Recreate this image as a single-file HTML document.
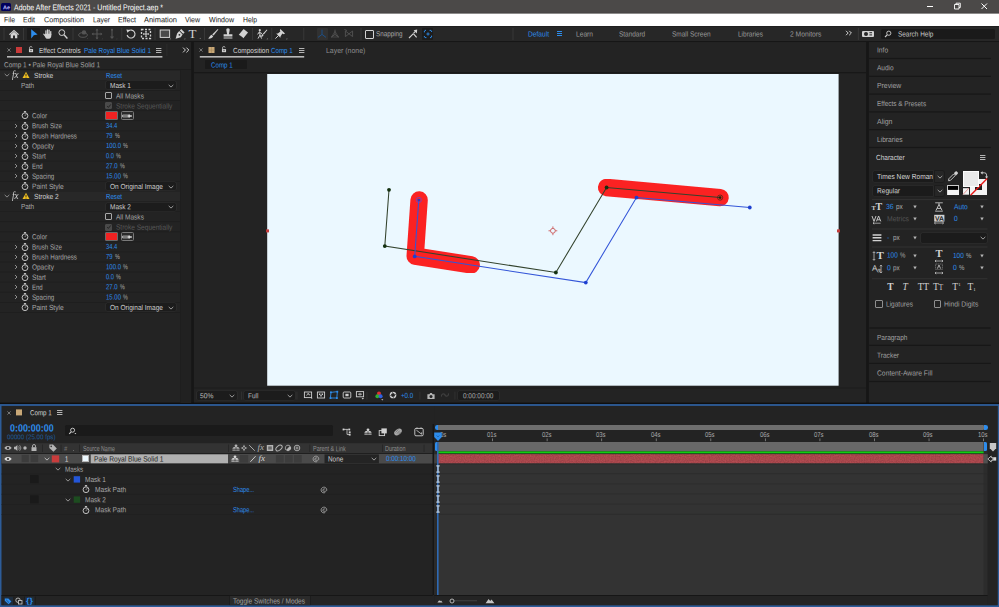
<!DOCTYPE html>
<html><head><meta charset="utf-8"><title>Adobe After Effects 2021 - Untitled Project.aep *</title>
<style>
html,body{margin:0;padding:0;background:#232323;}
body{width:999px;height:607px;position:relative;overflow:hidden;font-family:"Liberation Sans",sans-serif;}
#r{position:absolute;left:0;top:0;width:999px;height:607px;overflow:hidden;}
#r div,#r span,#r svg{position:absolute;}
#r span{white-space:pre;transform-origin:0 50%;display:block;line-height:12px;}
#r svg{overflow:visible;}
</style></head><body><div id="r">
<svg style="left:0px;top:0px" width="999" height="14"><rect x="0.00" y="0.00" width="999.00" height="13.60" fill="#4b4948"/></svg>
<svg style="left:0px;top:12px" width="999" height="2"><rect x="0.00" y="0.60" width="999.00" height="1.00" fill="#454342"/></svg>
<div style="left:1px;top:2.6px;width:10px;height:8.6px;background:#00005b;border-radius:1.5px;"></div>
<span id="t1" style="left:2.6px;top:1px;font-size:5.5px;color:#c4c4ff;transform:translateY(0.13px) scaleX(0.9956) rotate(0.05deg);font-weight:bold;">Ae</span>
<span id="t2" style="left:14px;top:1px;font-size:8.4px;color:#ffffff;transform:translateY(0.18px) scaleX(0.8341) rotate(0.05deg);">Adobe After Effects 2021 - Untitled Project.aep *</span>
<svg style="left:920px;top:0px;" width="79" height="14" viewBox="0 0 79 14"><path d="M7 6.5h6" stroke="#fff" stroke-width="1" fill="none"/><path d="M34.5 4.5h4.5v4.5h-4.5z M36 4.5v-1.3h4.3v4.3h-1.3" stroke="#fff" stroke-width="0.9" fill="none"/><path d="M61.5 3.5l5.5 5.5M67 3.5l-5.5 5.5" stroke="#fff" stroke-width="1" fill="none"/></svg>
<svg style="left:0px;top:13px" width="999" height="14"><rect x="0.00" y="0.60" width="999.00" height="12.50" fill="#ffffff"/></svg>
<span id="t3" style="left:4px;top:14px;font-size:7.6px;color:#111111;transform:translateY(0.23px) scaleX(0.8980) rotate(0.05deg);">File</span>
<span id="t4" style="left:23px;top:14px;font-size:7.6px;color:#111111;transform:translateY(0.23px) scaleX(0.9165) rotate(0.05deg);">Edit</span>
<span id="t5" style="left:44px;top:14px;font-size:7.6px;color:#111111;transform:translateY(0.23px) scaleX(0.9474) rotate(0.05deg);">Composition</span>
<span id="t6" style="left:93px;top:14px;font-size:7.6px;color:#111111;transform:translateY(0.23px) scaleX(0.8947) rotate(0.05deg);">Layer</span>
<span id="t7" style="left:118px;top:14px;font-size:7.6px;color:#111111;transform:translateY(0.23px) scaleX(0.9335) rotate(0.05deg);">Effect</span>
<span id="t8" style="left:144px;top:14px;font-size:7.6px;color:#111111;transform:translateY(0.23px) scaleX(0.9769) rotate(0.05deg);">Animation</span>
<span id="t9" style="left:185px;top:14px;font-size:7.6px;color:#111111;transform:translateY(0.23px) scaleX(0.9187) rotate(0.05deg);">View</span>
<span id="t10" style="left:209px;top:14px;font-size:7.6px;color:#111111;transform:translateY(0.23px) scaleX(0.9254) rotate(0.05deg);">Window</span>
<span id="t11" style="left:243px;top:14px;font-size:7.6px;color:#111111;transform:translateY(0.23px) scaleX(0.8960) rotate(0.05deg);">Help</span>
<svg style="left:0px;top:26px" width="999" height="16"><rect x="0.00" y="0.10" width="999.00" height="15.40" fill="#272727"/></svg>
<svg style="left:0px;top:26px" width="999" height="1"><rect x="0.00" y="0.10" width="999.00" height="0.70" fill="#1c1c1c"/></svg>
<svg style="left:0px;top:41px" width="999" height="2"><rect x="0.00" y="0.00" width="999.00" height="1.20" fill="#161616"/></svg>
<svg style="left:3px;top:28px" width="2" height="12"><rect x="0.60" y="0.00" width="0.80" height="12.00" fill="#3d3d3d"/></svg>
<svg style="left:23px;top:28px" width="1" height="12"><rect x="0.10" y="0.00" width="0.80" height="12.00" fill="#3d3d3d"/></svg>
<svg style="left:72px;top:28px" width="2" height="12"><rect x="0.60" y="0.00" width="0.80" height="12.00" fill="#3d3d3d"/></svg>
<svg style="left:121px;top:28px" width="2" height="12"><rect x="0.40" y="0.00" width="0.80" height="12.00" fill="#3d3d3d"/></svg>
<svg style="left:154px;top:28px" width="2" height="12"><rect x="0.60" y="0.00" width="0.80" height="12.00" fill="#3d3d3d"/></svg>
<svg style="left:204px;top:28px" width="1" height="12"><rect x="0.10" y="0.00" width="0.80" height="12.00" fill="#3d3d3d"/></svg>
<svg style="left:252px;top:28px" width="1" height="12"><rect x="0.20" y="0.00" width="0.80" height="12.00" fill="#3d3d3d"/></svg>
<svg style="left:271px;top:28px" width="2" height="12"><rect x="0.40" y="0.00" width="0.80" height="12.00" fill="#3d3d3d"/></svg>
<svg style="left:303px;top:28px" width="2" height="12"><rect x="0.40" y="0.00" width="0.80" height="12.00" fill="#3d3d3d"/></svg>
<svg style="left:360px;top:28px" width="2" height="12"><rect x="0.60" y="0.00" width="0.80" height="12.00" fill="#3d3d3d"/></svg>
<svg style="left:512px;top:28px" width="2" height="12"><rect x="0.60" y="0.00" width="0.80" height="12.00" fill="#3d3d3d"/></svg>
<svg style="left:857px;top:28px" width="2" height="12"><rect x="0.90" y="0.00" width="0.80" height="12.00" fill="#3d3d3d"/></svg>
<div style="left:27px;top:27.5px;width:12.6px;height:12.6px;background:#1c1c1c;border-radius:1px;"></div>
<div style="left:316.5px;top:27.5px;width:11.5px;height:12.6px;background:#313131;border-radius:1px;"></div>
<div style="left:422px;top:27.5px;width:11.3px;height:12.6px;background:#1c1c1c;border-radius:1px;"></div>
<svg style="left:7.4px;top:26.6px;" width="14" height="14" viewBox="-7.0 -7.0 14 14"><path d="M-5 0.3L0 -4.3L5 0.3L4.2 1L0 -2.8L-4.2 1Z M-3.3 0.6L0 -2.3L3.3 0.6V4.2H1V1.4H-1V4.2H-3.3Z" fill="#d2d2d2"/></svg>
<svg style="left:26.5px;top:26.6px;" width="14" height="14" viewBox="-7.0 -7.0 14 14"><path d="M-2.8 -4.8L3.6 0.6L-0.2 1.2L-2.8 4.6Z" fill="#2d8ceb"/></svg>
<svg style="left:41.0px;top:26.6px;" width="14" height="14" viewBox="-7.0 -7.0 14 14"><g stroke="#d2d2d2" stroke-width="1.25" stroke-linecap="round" fill="none"><path d="M-2.1 0.4V-3.2"/><path d="M-0.5 0V-4.2"/><path d="M1.1 0V-3.8"/><path d="M2.7 0.6V-2.4"/><path d="M-2.4 2.2L-4.2 0.2"/></g><path d="M-2.7 -0.2H3.3V1.6C3.3 3.4 2.4 4.6 1.4 4.8H-1.4C-2.2 4.2 -3.2 3 -3.4 1.6Z" fill="#d2d2d2"/></svg>
<svg style="left:56.0px;top:26.6px;" width="14" height="14" viewBox="-7.0 -7.0 14 14"><circle cx="-1.2" cy="-1.4" r="2.9" fill="none" stroke="#d2d2d2" stroke-width="1"/><path d="M1 0.8L4.4 4.4" stroke="#d2d2d2" stroke-width="1.4"/></svg>
<svg style="left:75.5px;top:26.6px;" width="14" height="14" viewBox="-7.0 -7.0 14 14"><ellipse cx="0" cy="1" rx="4.3" ry="2.3" fill="none" stroke="#555555" stroke-width="1"/><circle cx="1" cy="-1.6" r="2.2" fill="#555555"/><path d="M4 4.8h1v-1z" fill="#555555"/></svg>
<svg style="left:90.0px;top:26.6px;" width="14" height="14" viewBox="-7.0 -7.0 14 14"><path d="M0 -4.5V4.5M-4.5 0H4.5" stroke="#555555" stroke-width="1.1"/><path d="M0 -5.4l1.5 1.8h-3zM0 5.4l1.5-1.8h-3zM-5.4 0l1.8 1.5v-3zM5.4 0l-1.8 1.5v-3z" fill="#555555"/><path d="M4.6 5.2h1v-1z" fill="#555555"/></svg>
<svg style="left:105.0px;top:26.6px;" width="14" height="14" viewBox="-7.0 -7.0 14 14"><path d="M0 -4.5V3.4" stroke="#555555" stroke-width="1.1"/><path d="M0 5l2.2-2.6h-4.4z" fill="#555555"/><circle cx="0" cy="-4.2" r="1" fill="#555555"/><path d="M4.2 5.2h1v-1z" fill="#555555"/></svg>
<svg style="left:124.0px;top:26.6px;" width="14" height="14" viewBox="-7.0 -7.0 14 14"><path d="M-2.6 -3A4 4 0 1 1 -3.9 1" fill="none" stroke="#d2d2d2" stroke-width="1.1"/><path d="M-4.6 -4.6L-0.9 -3.9L-3.6 -1.2Z" fill="#d2d2d2"/></svg>
<svg style="left:138.8px;top:26.6px;" width="14" height="14" viewBox="-7.0 -7.0 14 14"><path d="M-4.5 -4.5h9v9h-9z" fill="none" stroke="#d2d2d2" stroke-width="1.3" stroke-dasharray="2 1.5"/><path d="M0 -2.6V2.6M-2.6 0H2.6" stroke="#d2d2d2" stroke-width="1"/><path d="M0 -3.2l1 1.2h-2zM0 3.2l1-1.2h-2zM-3.2 0l1.2 1v-2zM3.2 0l-1.2 1v-2z" fill="#d2d2d2"/></svg>
<svg style="left:157.8px;top:26.6px;" width="14" height="14" viewBox="-7.0 -7.0 14 14"><rect x="-4.8" y="-4" width="9.4" height="7.4" fill="#4a4a4a" stroke="#d2d2d2" stroke-width="1"/><path d="M4.6 5.2h1v-1z" fill="#d2d2d2"/></svg>
<svg style="left:172.6px;top:26.6px;" width="14" height="14" viewBox="-7.0 -7.0 14 14"><path d="M1.2 -5L4.6 -1.6L3.2 -0.2L-0.2 -3.6Z M-0.8 -3L2.6 0.4L0.8 3.2L-4.4 4.8L-2.9 -0.6Z" fill="#d2d2d2"/><circle cx="-0.6" cy="0.8" r="0.9" fill="#272727"/><path d="M4.2 5.2h1v-1z" fill="#d2d2d2"/></svg>
<span style="left:188.6px;top:26.2px;font-family:'Liberation Serif',serif;font-size:13px;line-height:15px;color:#d2d2d2;">T</span>
<svg style="left:197.5px;top:36.0px;" width="4" height="4" viewBox="-2.0 -2.0 4 4"><path d="M-0.5 0.7h1v-1z" fill="#d2d2d2"/></svg>
<svg style="left:206.3px;top:26.6px;" width="14" height="14" viewBox="-7.0 -7.0 14 14"><path d="M4.8 -5L5.4 -4.4L0.6 1.6L-0.8 0.4Z" fill="#d2d2d2"/><path d="M-1.4 0.8L0.2 2.2C-0.4 4-2.6 4.8-4.8 4.6C-3.4 3.6-3.2 1.4-1.4 0.8Z" fill="#d2d2d2"/></svg>
<svg style="left:221.0px;top:26.6px;" width="14" height="14" viewBox="-7.0 -7.0 14 14"><path d="M-1.6 -3.6A1.7 1.7 0 1 1 1.6 -3.6L0.9 0.2H4.4V2.6H-4.4V0.2H-0.9Z M-4.4 3.4H4.4V4.6H-4.4Z" fill="#d2d2d2"/></svg>
<svg style="left:236.0px;top:26.6px;" width="14" height="14" viewBox="-7.0 -7.0 14 14"><path d="M0.6 -5L5 -1.6L0.4 4.2L-4.2 0.8Z" fill="#d2d2d2"/><path d="M-3.4 1.6L-0.2 4" stroke="#272727" stroke-width="0.8"/></svg>
<svg style="left:255.0px;top:26.6px;" width="14" height="14" viewBox="-7.0 -7.0 14 14"><circle cx="-2.2" cy="-3.8" r="1.1" fill="#d2d2d2"/><path d="M-2.4 -2.4L-4.4 0.4M-2.4 -2.4L-2 1L-4 4.6M-2 1L-0.4 4.6M-2.4 -1.6L0 -0.4" stroke="#d2d2d2" stroke-width="1" fill="none"/><path d="M4.8 -4.6L5.4 -4L1.8 0.6L0.8 -0.2Z M0.4 0L1.6 1C1 2.6-0.2 3 -1.4 2.8C-0.4 2.2-0.6 0.6 0.4 0Z" fill="#d2d2d2"/><path d="M4.6 5.2h1v-1z" fill="#d2d2d2"/></svg>
<svg style="left:272.8px;top:26.6px;" width="14" height="14" viewBox="-7.0 -7.0 14 14"><path d="M0.4 -5L5 -0.4L3.8 0.2L2.4 -0.4L0.6 2.2L0.4 3.8L-3.8 -0.4L-2.2 -0.6L0.4 -2.4L-0.2 -3.8Z" fill="#d2d2d2"/><path d="M-1.4 1.4L-4.6 4.6" stroke="#d2d2d2" stroke-width="1"/><path d="M6.2 5.2h1v-1z" fill="#d2d2d2"/></svg>
<svg style="left:314.8px;top:26.6px;" width="14" height="14" viewBox="-7.0 -7.0 14 14"><path d="M0 -4.4V0.4L-4 3.4M0 0.4L4 3.4" stroke="#1d4f86" stroke-width="1" fill="none"/></svg>
<svg style="left:328.0px;top:26.6px;" width="14" height="14" viewBox="-7.0 -7.0 14 14"><path d="M0 -4.4V0.4L-4 3.4M0 0.4L4 3.4" stroke="#555555" stroke-width="0.9" fill="none"/><path d="M-3.4 3L0 -2.6L3.4 3Z" stroke="#555555" stroke-width="0.7" fill="none"/></svg>
<svg style="left:342.0px;top:26.6px;" width="14" height="14" viewBox="-7.0 -7.0 14 14"><path d="M-3.6 -3L3.6 2.6V-3L-3.6 2.6Z" stroke="#555555" stroke-width="0.9" fill="none"/><path d="M-4.6 -4.6L-2 -3.4" stroke="#555555" stroke-width="0.9"/></svg>
<div style="left:365.3px;top:30.3px;width:6.4px;height:6.4px;background:transparent;border:1.1px solid #d2d2d2;border-radius:1px;"></div>
<span id="t12" style="left:376px;top:28px;font-size:7.4px;color:#a9a9a9;transform:translateY(0.30px) scaleX(0.8484) rotate(0.05deg);">Snapping</span>
<svg style="left:406.2px;top:26.6px;" width="14" height="14" viewBox="-7.0 -7.0 14 14"><path d="M-4 4L0.4 -0.4M0.4 -0.4L3.6 3.4" stroke="#d2d2d2" stroke-width="1.1" fill="none"/><path d="M4.2 -4.4L3.8 -0.6L0.6 -3.8Z" fill="#d2d2d2"/><path d="M3 -3.2L0.6 -0.8" stroke="#d2d2d2" stroke-width="1.1"/></svg>
<svg style="left:420.6px;top:26.6px;" width="14" height="14" viewBox="-7.0 -7.0 14 14"><path d="M-3.6 -1.6V-3.6H-1.6M1.6 -3.6H3.6V-1.6M3.6 1.6V3.6H1.6M-1.6 3.6H-3.6V1.6" stroke="#2d8ceb" stroke-width="1" fill="none" stroke-dasharray="1.4 0.8"/><path d="M-1.6 0H1.6M0 -1.6V1.6" stroke="#2d8ceb" stroke-width="0.9"/></svg>
<span id="t13" style="left:527.6px;top:28px;font-size:7.4px;color:#2d8ceb;transform:translateY(0.50px) scaleX(0.8966) rotate(0.05deg);">Default</span>
<div style="left:557px;top:31px;width:5px;height:1px;background:#2d8ceb;"></div>
<div style="left:557px;top:33px;width:5px;height:1px;background:#2d8ceb;"></div>
<div style="left:557px;top:35px;width:5px;height:1px;background:#2d8ceb;"></div>
<span id="t14" style="left:576px;top:28px;font-size:7.4px;color:#9d9d9d;transform:translateY(0.50px) scaleX(0.8992) rotate(0.05deg);">Learn</span>
<span id="t15" style="left:619.4px;top:28px;font-size:7.4px;color:#9d9d9d;transform:translateY(0.50px) scaleX(0.8733) rotate(0.05deg);">Standard</span>
<span id="t16" style="left:672.4px;top:28px;font-size:7.4px;color:#9d9d9d;transform:translateY(0.50px) scaleX(0.8782) rotate(0.05deg);">Small Screen</span>
<span id="t17" style="left:738px;top:28px;font-size:7.4px;color:#9d9d9d;transform:translateY(0.50px) scaleX(0.8820) rotate(0.05deg);">Libraries</span>
<span id="t18" style="left:790px;top:28px;font-size:7.4px;color:#9d9d9d;transform:translateY(0.50px) scaleX(0.9097) rotate(0.05deg);">2 Monitors</span>
<svg style="left:845.4px;top:29.4px;" width="8" height="8" viewBox="-4.0 -4.0 8 8"><path d="M-3 -2.2L-0.8 0L-3 2.2M0.2 -2.2L2.4 0L0.2 2.2" stroke="#d2d2d2" stroke-width="1" fill="none"/></svg>
<div style="left:862px;top:30.6px;width:11.6px;height:6.4px;background:#d2d2d2;border-radius:1px;"></div>
<div style="left:864px;top:32px;width:3.6px;height:3.6px;background:#272727;border-radius:2px;"></div>
<svg style="left:869px;top:32px" width="3" height="2"><rect x="0.40" y="0.20" width="2.60" height="1.00" fill="#272727"/></svg>
<svg style="left:869px;top:34px" width="3" height="2"><rect x="0.40" y="0.40" width="2.60" height="1.00" fill="#272727"/></svg>
<div style="left:881px;top:28.6px;width:114.4px;height:10.6px;background:#1a1a1a;border-radius:1.5px;"></div>
<svg style="left:884.0px;top:29.799999999999997px;" width="8" height="8" viewBox="-4.0 -4.0 8 8"><circle cx="0.8" cy="-0.8" r="2.1" fill="none" stroke="#d2d2d2" stroke-width="0.9"/><path d="M-0.8 0.8L-3 3" stroke="#d2d2d2" stroke-width="1.1"/></svg>
<span id="t19" style="left:897.6px;top:28px;font-size:7.4px;color:#c9c9c9;transform:translateY(0.50px) scaleX(0.8704) rotate(0.05deg);">Search Help</span>
<svg style="left:0px;top:42px" width="999" height="362"><rect x="0.00" y="0.20" width="999.00" height="361.00" fill="#232323"/></svg>
<svg style="left:191px;top:42px" width="3" height="362"><rect x="0.20" y="0.00" width="2.60" height="361.50" fill="#161616"/></svg>
<svg style="left:866px;top:42px" width="3" height="362"><rect x="0.20" y="0.00" width="2.60" height="361.50" fill="#161616"/></svg>
<svg style="left:0px;top:402px" width="999" height="3"><rect x="0.00" y="0.60" width="999.00" height="1.60" fill="#0e0e0e"/></svg>
<svg style="left:5.5px;top:47.4px;" width="6" height="6" viewBox="-3.0 -3.0 6 6"><path d="M-1.6 -1.6L1.6 1.6M1.6 -1.6L-1.6 1.6" stroke="#8a8a8a" stroke-width="0.8"/></svg>
<div style="left:16px;top:47px;width:6px;height:6px;background:#c83a3a;"></div>
<svg style="left:26.5px;top:46.0px;" width="8" height="8" viewBox="-4.0 -4.0 8 8"><g transform="translate(0,-0.4) scale(0.86)"><path d="M-1.6 -0.4V-2A1.4 1.4 0 0 1 1.2 -2.4" stroke="#cfcfcf" stroke-width="0.9" fill="none"/><rect x="-2.4" y="-0.6" width="4.8" height="3.6" fill="#cfcfcf"/><rect x="-0.5" y="0.4" width="1" height="1.4" fill="#232323"/></g></svg>
<span id="t20" style="left:39.3px;top:44px;font-size:7.4px;color:#d2d2d2;transform:translateY(0.90px) scaleX(0.8626) rotate(0.05deg);">Effect Controls</span>
<span id="t21" style="left:84px;top:44px;font-size:7.4px;color:#2d8ceb;transform:translateY(0.90px) scaleX(0.8673) rotate(0.05deg);">Pale Royal Blue Solid 1</span>
<svg style="left:156px;top:48px" width="6" height="1"><rect x="0.00" y="0.00" width="5.40" height="1.00" fill="#b5b5b5"/></svg>
<svg style="left:156px;top:50px" width="6" height="1"><rect x="0.00" y="0.00" width="5.40" height="1.00" fill="#b5b5b5"/></svg>
<svg style="left:156px;top:52px" width="6" height="1"><rect x="0.00" y="0.00" width="5.40" height="1.00" fill="#b5b5b5"/></svg>
<svg style="left:7px;top:56px" width="156" height="2"><rect x="0.00" y="0.00" width="155.40" height="1.60" fill="#b9b9b9"/></svg>
<svg style="left:166px;top:44px" width="2" height="12"><rect x="0.60" y="0.00" width="0.70" height="12.00" fill="#303030"/></svg>
<svg style="left:181.5px;top:46.2px;" width="8" height="8" viewBox="-4.0 -4.0 8 8"><path d="M-3 -2.4L-0.6 0L-3 2.4M0.4 -2.4L2.8 0L0.4 2.4" stroke="#d2d2d2" stroke-width="1" fill="none"/></svg>
<span id="t22" style="left:3.9px;top:59px;font-size:7.4px;color:#a3a3a3;transform:translateY(0.20px) scaleX(0.8751) rotate(0.05deg);">Comp 1 • Pale Royal Blue Solid 1</span>
<svg style="left:0px;top:69px" width="191" height="2"><rect x="0.00" y="0.40" width="191.00" height="0.90" fill="#191919"/></svg>
<svg style="left:180px;top:70px" width="12" height="333"><rect x="0.40" y="0.00" width="10.80" height="333.00" fill="#212121"/></svg>
<svg style="left:180px;top:70px" width="1" height="333"><rect x="0.00" y="0.00" width="0.80" height="333.00" fill="#1f1f1f"/></svg>
<svg style="left:0px;top:70px" width="180" height="1"><rect x="0.00" y="0.00" width="180.00" height="0.70" fill="#1e1e1e"/></svg>
<svg style="left:0px;top:80px" width="180" height="1"><rect x="0.00" y="0.09" width="180.00" height="0.70" fill="#1e1e1e"/></svg>
<svg style="left:0px;top:90px" width="180" height="1"><rect x="0.00" y="0.17" width="180.00" height="0.70" fill="#1e1e1e"/></svg>
<svg style="left:0px;top:100px" width="180" height="1"><rect x="0.00" y="0.26" width="180.00" height="0.70" fill="#1e1e1e"/></svg>
<svg style="left:0px;top:110px" width="180" height="2"><rect x="0.00" y="0.35" width="180.00" height="0.70" fill="#1e1e1e"/></svg>
<svg style="left:0px;top:120px" width="180" height="2"><rect x="0.00" y="0.44" width="180.00" height="0.70" fill="#1e1e1e"/></svg>
<svg style="left:0px;top:130px" width="180" height="2"><rect x="0.00" y="0.52" width="180.00" height="0.70" fill="#1e1e1e"/></svg>
<svg style="left:0px;top:140px" width="180" height="2"><rect x="0.00" y="0.61" width="180.00" height="0.70" fill="#1e1e1e"/></svg>
<svg style="left:0px;top:150px" width="180" height="2"><rect x="0.00" y="0.70" width="180.00" height="0.70" fill="#1e1e1e"/></svg>
<svg style="left:0px;top:160px" width="180" height="2"><rect x="0.00" y="0.78" width="180.00" height="0.70" fill="#1e1e1e"/></svg>
<svg style="left:0px;top:170px" width="180" height="2"><rect x="0.00" y="0.87" width="180.00" height="0.70" fill="#1e1e1e"/></svg>
<svg style="left:0px;top:180px" width="180" height="2"><rect x="0.00" y="0.96" width="180.00" height="0.70" fill="#1e1e1e"/></svg>
<svg style="left:0px;top:191px" width="180" height="1"><rect x="0.00" y="0.04" width="180.00" height="0.70" fill="#1e1e1e"/></svg>
<svg style="left:0px;top:201px" width="180" height="1"><rect x="0.00" y="0.13" width="180.00" height="0.70" fill="#1e1e1e"/></svg>
<svg style="left:0px;top:211px" width="180" height="1"><rect x="0.00" y="0.22" width="180.00" height="0.70" fill="#1e1e1e"/></svg>
<svg style="left:0px;top:221px" width="180" height="2"><rect x="0.00" y="0.31" width="180.00" height="0.70" fill="#1e1e1e"/></svg>
<svg style="left:0px;top:231px" width="180" height="2"><rect x="0.00" y="0.39" width="180.00" height="0.70" fill="#1e1e1e"/></svg>
<svg style="left:0px;top:241px" width="180" height="2"><rect x="0.00" y="0.48" width="180.00" height="0.70" fill="#1e1e1e"/></svg>
<svg style="left:0px;top:251px" width="180" height="2"><rect x="0.00" y="0.57" width="180.00" height="0.70" fill="#1e1e1e"/></svg>
<svg style="left:0px;top:261px" width="180" height="2"><rect x="0.00" y="0.65" width="180.00" height="0.70" fill="#1e1e1e"/></svg>
<svg style="left:0px;top:271px" width="180" height="2"><rect x="0.00" y="0.74" width="180.00" height="0.70" fill="#1e1e1e"/></svg>
<svg style="left:0px;top:281px" width="180" height="2"><rect x="0.00" y="0.83" width="180.00" height="0.70" fill="#1e1e1e"/></svg>
<svg style="left:0px;top:291px" width="180" height="2"><rect x="0.00" y="0.91" width="180.00" height="0.70" fill="#1e1e1e"/></svg>
<svg style="left:0px;top:302px" width="180" height="1"><rect x="0.00" y="0.00" width="180.00" height="0.70" fill="#1e1e1e"/></svg>
<svg style="left:0px;top:312px" width="180" height="1"><rect x="0.00" y="0.09" width="180.00" height="0.70" fill="#1e1e1e"/></svg>
<svg style="left:0px;top:70px" width="180" height="11"><rect x="0.00" y="0.40" width="180.00" height="10.00" fill="#282828"/></svg>
<svg style="left:3.0px;top:71.4px;" width="8" height="8" viewBox="-4.0 -4.0 8 8"><path d="M-2.3 -1.1L0 1.1L2.3 -1.1" stroke="#9a9a9a" stroke-width="0.85" fill="none"/></svg>
<span style="left:11.6px;top:70.0px;font-family:'Liberation Serif',serif;font-style:italic;font-size:9.5px;line-height:11px;color:#d8d8d8;transform:scaleX(0.95);">fx</span>
<svg style="left:21.7px;top:71.4px;" width="8" height="8" viewBox="-4.0 -4.0 8 8"><path d="M0 -3.3L3.5 2.9H-3.5Z" fill="#f0c020"/><path d="M0 -1.2V1" stroke="#222" stroke-width="0.9"/><circle cx="0" cy="2" r="0.5" fill="#222"/></svg>
<span id="t23" style="left:33.8px;top:69px;font-size:7.4px;color:#cdcdcd;transform:translateY(0.90px) scaleX(0.8982) rotate(0.05deg);">Stroke</span>
<span id="t24" style="left:106px;top:69px;font-size:7.4px;color:#2d8ceb;transform:translateY(0.90px) scaleX(0.8285) rotate(0.05deg);">Reset</span>
<span id="t25" style="left:20.8px;top:79px;font-size:7.4px;color:#a9a9a9;transform:translateY(0.99px) scaleX(0.8674) rotate(0.05deg);">Path</span>
<div style="left:106px;top:81.48700000000001px;width:70px;height:8px;background:#1c1c1c;border-radius:1.5px;box-shadow:0 0 0 0.6px #2f2f2f;"></div>
<span id="t26" style="left:110.3px;top:80px;font-size:7.4px;color:#d0d0d0;transform:translateY(0.09px) scaleX(0.8771) rotate(0.05deg);">Mask 1</span>
<svg style="left:167.2px;top:81.68700000000001px;" width="8" height="8" viewBox="-4.0 -4.0 8 8"><path d="M-2.3 -1.1L0 1.1L2.3 -1.1" stroke="#b0b0b0" stroke-width="0.85" fill="none"/></svg>
<div style="left:105.4px;top:92.27400000000002px;width:7px;height:7px;background:transparent;border:1px solid #a8a8a8;border-radius:1px;box-sizing:border-box;"></div>
<span id="t27" style="left:115.6px;top:90px;font-size:7.4px;color:#a9a9a9;transform:translateY(0.47px) scaleX(0.8822) rotate(0.05deg);">All Masks</span>
<div style="left:105.4px;top:102.46100000000001px;width:7px;height:7px;background:#4a4a4a;border:1px solid #4a4a4a;border-radius:1px;box-sizing:border-box;"></div>
<svg style="left:104.9px;top:101.96100000000001px;" width="8" height="8" viewBox="-4.0 -4.0 8 8"><path d="M-1.8 0L-0.6 1.4L1.8 -1.6" stroke="#232323" stroke-width="1" fill="none"/></svg>
<span id="t28" style="left:115.6px;top:100px;font-size:7.4px;color:#585858;transform:translateY(0.56px) scaleX(0.8856) rotate(0.05deg);">Stroke Sequentially</span>
<svg style="left:20.0px;top:110.44800000000001px;" width="10" height="10" viewBox="-5.0 -5.0 10 10"><circle cx="0" cy="0.7" r="2.9" fill="none" stroke="#c8c8c8" stroke-width="0.95"/><path d="M-1.1 -3.5h2.2M0 -3.4v1.2M0 0.7L1.2 -0.7" stroke="#c8c8c8" stroke-width="0.9"/></svg>
<span id="t29" style="left:31.7px;top:110px;font-size:7.4px;color:#a9a9a9;transform:translateY(0.25px) scaleX(0.8488) rotate(0.05deg);">Color</span>
<div style="left:105.4px;top:111.348px;width:12.8px;height:9px;background:#f02222;border:1px solid #6a6a6a;box-sizing:border-box;border-radius:1px;"></div>
<div style="left:120.6px;top:111.348px;width:13.2px;height:9px;background:#2a2a2a;border:1px solid #7a7a7a;box-sizing:border-box;border-radius:1.5px;"></div>
<svg style="left:121.2px;top:109.848px;" width="12" height="12" viewBox="-6.0 -6.0 12 12"><path d="M-4.4 -0.9H1.2V0.9H-4.4Z" fill="none" stroke="#d8d8d8" stroke-width="0.8"/><path d="M1.2 -1.6H3V1.6H1.2Z M3 -0.8H4.8V0.8H3Z" fill="#d8d8d8"/></svg>
<svg style="left:11.6px;top:121.83500000000001px;" width="8" height="8" viewBox="-4.0 -4.0 8 8"><path d="M-1 -2L1 0L-1 2" stroke="#9a9a9a" stroke-width="0.9" fill="none"/></svg>
<svg style="left:20.0px;top:120.53500000000001px;" width="10" height="10" viewBox="-5.0 -5.0 10 10"><circle cx="0" cy="0.7" r="2.9" fill="none" stroke="#c8c8c8" stroke-width="0.95"/><path d="M-1.1 -3.5h2.2M0 -3.4v1.2M0 0.7L1.2 -0.7" stroke="#c8c8c8" stroke-width="0.9"/></svg>
<span id="t30" style="left:31.7px;top:120px;font-size:7.4px;color:#a9a9a9;transform:translateY(0.34px) scaleX(0.8392) rotate(0.05deg);">Brush Size</span>
<span id="t31" style="left:106px;top:119px;font-size:7.4px;color:#2d8ceb;transform:translateY(0.94px) scaleX(0.7852) rotate(0.05deg);">34.4</span>
<svg style="left:11.6px;top:131.922px;" width="8" height="8" viewBox="-4.0 -4.0 8 8"><path d="M-1 -2L1 0L-1 2" stroke="#9a9a9a" stroke-width="0.9" fill="none"/></svg>
<svg style="left:20.0px;top:130.62199999999999px;" width="10" height="10" viewBox="-5.0 -5.0 10 10"><circle cx="0" cy="0.7" r="2.9" fill="none" stroke="#c8c8c8" stroke-width="0.95"/><path d="M-1.1 -3.5h2.2M0 -3.4v1.2M0 0.7L1.2 -0.7" stroke="#c8c8c8" stroke-width="0.9"/></svg>
<span id="t32" style="left:31.7px;top:130px;font-size:7.4px;color:#a9a9a9;transform:translateY(0.42px) scaleX(0.8491) rotate(0.05deg);">Brush Hardness</span>
<span id="t33" style="left:106px;top:130px;font-size:7.4px;color:#2d8ceb;transform:translateY(0.02px) scaleX(0.8015) rotate(0.05deg);">79</span>
<span id="t34" style="left:114.6px;top:130px;font-size:7.4px;color:#a9a9a9;transform:translateY(0.02px) scaleX(0.7297) rotate(0.05deg);">%</span>
<svg style="left:11.6px;top:142.00900000000001px;" width="8" height="8" viewBox="-4.0 -4.0 8 8"><path d="M-1 -2L1 0L-1 2" stroke="#9a9a9a" stroke-width="0.9" fill="none"/></svg>
<svg style="left:20.0px;top:140.709px;" width="10" height="10" viewBox="-5.0 -5.0 10 10"><circle cx="0" cy="0.7" r="2.9" fill="none" stroke="#c8c8c8" stroke-width="0.95"/><path d="M-1.1 -3.5h2.2M0 -3.4v1.2M0 0.7L1.2 -0.7" stroke="#c8c8c8" stroke-width="0.9"/></svg>
<span id="t35" style="left:31.7px;top:140px;font-size:7.4px;color:#a9a9a9;transform:translateY(0.51px) scaleX(0.8738) rotate(0.05deg);">Opacity</span>
<span id="t36" style="left:106px;top:140px;font-size:7.4px;color:#2d8ceb;transform:translateY(0.11px) scaleX(0.8108) rotate(0.05deg);">100.0</span>
<span id="t37" style="left:123px;top:140px;font-size:7.4px;color:#a9a9a9;transform:translateY(0.11px) scaleX(0.7297) rotate(0.05deg);">%</span>
<svg style="left:11.6px;top:152.096px;" width="8" height="8" viewBox="-4.0 -4.0 8 8"><path d="M-1 -2L1 0L-1 2" stroke="#9a9a9a" stroke-width="0.9" fill="none"/></svg>
<svg style="left:20.0px;top:150.796px;" width="10" height="10" viewBox="-5.0 -5.0 10 10"><circle cx="0" cy="0.7" r="2.9" fill="none" stroke="#c8c8c8" stroke-width="0.95"/><path d="M-1.1 -3.5h2.2M0 -3.4v1.2M0 0.7L1.2 -0.7" stroke="#c8c8c8" stroke-width="0.9"/></svg>
<span id="t38" style="left:31.7px;top:150px;font-size:7.4px;color:#a9a9a9;transform:translateY(0.60px) scaleX(0.8905) rotate(0.05deg);">Start</span>
<span id="t39" style="left:106px;top:150px;font-size:7.4px;color:#2d8ceb;transform:translateY(0.20px) scaleX(0.7781) rotate(0.05deg);">0.0</span>
<span id="t40" style="left:116px;top:150px;font-size:7.4px;color:#a9a9a9;transform:translateY(0.20px) scaleX(0.7297) rotate(0.05deg);">%</span>
<svg style="left:11.6px;top:162.183px;" width="8" height="8" viewBox="-4.0 -4.0 8 8"><path d="M-1 -2L1 0L-1 2" stroke="#9a9a9a" stroke-width="0.9" fill="none"/></svg>
<svg style="left:20.0px;top:160.88299999999998px;" width="10" height="10" viewBox="-5.0 -5.0 10 10"><circle cx="0" cy="0.7" r="2.9" fill="none" stroke="#c8c8c8" stroke-width="0.95"/><path d="M-1.1 -3.5h2.2M0 -3.4v1.2M0 0.7L1.2 -0.7" stroke="#c8c8c8" stroke-width="0.9"/></svg>
<span id="t41" style="left:31.7px;top:160px;font-size:7.4px;color:#a9a9a9;transform:translateY(0.68px) scaleX(0.8133) rotate(0.05deg);">End</span>
<span id="t42" style="left:106px;top:160px;font-size:7.4px;color:#2d8ceb;transform:translateY(0.28px) scaleX(0.8061) rotate(0.05deg);">27.0</span>
<span id="t43" style="left:119.6px;top:160px;font-size:7.4px;color:#a9a9a9;transform:translateY(0.28px) scaleX(0.7297) rotate(0.05deg);">%</span>
<svg style="left:11.6px;top:172.27px;" width="8" height="8" viewBox="-4.0 -4.0 8 8"><path d="M-1 -2L1 0L-1 2" stroke="#9a9a9a" stroke-width="0.9" fill="none"/></svg>
<svg style="left:20.0px;top:170.97px;" width="10" height="10" viewBox="-5.0 -5.0 10 10"><circle cx="0" cy="0.7" r="2.9" fill="none" stroke="#c8c8c8" stroke-width="0.95"/><path d="M-1.1 -3.5h2.2M0 -3.4v1.2M0 0.7L1.2 -0.7" stroke="#c8c8c8" stroke-width="0.9"/></svg>
<span id="t44" style="left:31.7px;top:170px;font-size:7.4px;color:#a9a9a9;transform:translateY(0.77px) scaleX(0.8346) rotate(0.05deg);">Spacing</span>
<span id="t45" style="left:106px;top:170px;font-size:7.4px;color:#2d8ceb;transform:translateY(0.37px) scaleX(0.8108) rotate(0.05deg);">15.00</span>
<span id="t46" style="left:123px;top:170px;font-size:7.4px;color:#a9a9a9;transform:translateY(0.37px) scaleX(0.7297) rotate(0.05deg);">%</span>
<svg style="left:20.0px;top:181.057px;" width="10" height="10" viewBox="-5.0 -5.0 10 10"><circle cx="0" cy="0.7" r="2.9" fill="none" stroke="#c8c8c8" stroke-width="0.95"/><path d="M-1.1 -3.5h2.2M0 -3.4v1.2M0 0.7L1.2 -0.7" stroke="#c8c8c8" stroke-width="0.9"/></svg>
<span id="t47" style="left:31.7px;top:180px;font-size:7.4px;color:#a9a9a9;transform:translateY(0.86px) scaleX(0.8969) rotate(0.05deg);">Paint Style</span>
<div style="left:106px;top:182.357px;width:70px;height:8px;background:#1c1c1c;border-radius:1.5px;box-shadow:0 0 0 0.6px #2f2f2f;"></div>
<span id="t48" style="left:110.3px;top:180px;font-size:7.4px;color:#d0d0d0;transform:translateY(0.96px) scaleX(0.8819) rotate(0.05deg);">On Original Image</span>
<svg style="left:167.2px;top:182.557px;" width="8" height="8" viewBox="-4.0 -4.0 8 8"><path d="M-2.3 -1.1L0 1.1L2.3 -1.1" stroke="#b0b0b0" stroke-width="0.85" fill="none"/></svg>
<svg style="left:0px;top:191px" width="180" height="11"><rect x="0.00" y="0.44" width="180.00" height="10.00" fill="#282828"/></svg>
<svg style="left:3.0px;top:192.44400000000002px;" width="8" height="8" viewBox="-4.0 -4.0 8 8"><path d="M-2.3 -1.1L0 1.1L2.3 -1.1" stroke="#9a9a9a" stroke-width="0.85" fill="none"/></svg>
<span style="left:11.6px;top:191.044px;font-family:'Liberation Serif',serif;font-style:italic;font-size:9.5px;line-height:11px;color:#d8d8d8;transform:scaleX(0.95);">fx</span>
<svg style="left:21.7px;top:192.44400000000002px;" width="8" height="8" viewBox="-4.0 -4.0 8 8"><path d="M0 -3.3L3.5 2.9H-3.5Z" fill="#f0c020"/><path d="M0 -1.2V1" stroke="#222" stroke-width="0.9"/><circle cx="0" cy="2" r="0.5" fill="#222"/></svg>
<span id="t49" style="left:33.8px;top:190px;font-size:7.4px;color:#cdcdcd;transform:translateY(0.94px) scaleX(0.9008) rotate(0.05deg);">Stroke 2</span>
<span id="t50" style="left:106px;top:190px;font-size:7.4px;color:#2d8ceb;transform:translateY(0.94px) scaleX(0.8285) rotate(0.05deg);">Reset</span>
<span id="t51" style="left:20.8px;top:201px;font-size:7.4px;color:#a9a9a9;transform:translateY(0.03px) scaleX(0.8674) rotate(0.05deg);">Path</span>
<div style="left:106px;top:202.531px;width:70px;height:8px;background:#1c1c1c;border-radius:1.5px;box-shadow:0 0 0 0.6px #2f2f2f;"></div>
<span id="t52" style="left:110.3px;top:201px;font-size:7.4px;color:#d0d0d0;transform:translateY(0.13px) scaleX(0.8771) rotate(0.05deg);">Mask 2</span>
<svg style="left:167.2px;top:202.731px;" width="8" height="8" viewBox="-4.0 -4.0 8 8"><path d="M-2.3 -1.1L0 1.1L2.3 -1.1" stroke="#b0b0b0" stroke-width="0.85" fill="none"/></svg>
<div style="left:105.4px;top:213.31800000000004px;width:7px;height:7px;background:transparent;border:1px solid #a8a8a8;border-radius:1px;box-sizing:border-box;"></div>
<span id="t53" style="left:115.6px;top:211px;font-size:7.4px;color:#a9a9a9;transform:translateY(0.52px) scaleX(0.8822) rotate(0.05deg);">All Masks</span>
<div style="left:105.4px;top:223.50500000000002px;width:7px;height:7px;background:#4a4a4a;border:1px solid #4a4a4a;border-radius:1px;box-sizing:border-box;"></div>
<svg style="left:104.9px;top:223.00500000000002px;" width="8" height="8" viewBox="-4.0 -4.0 8 8"><path d="M-1.8 0L-0.6 1.4L1.8 -1.6" stroke="#232323" stroke-width="1" fill="none"/></svg>
<span id="t54" style="left:115.6px;top:221px;font-size:7.4px;color:#585858;transform:translateY(0.61px) scaleX(0.8856) rotate(0.05deg);">Stroke Sequentially</span>
<svg style="left:20.0px;top:231.49200000000002px;" width="10" height="10" viewBox="-5.0 -5.0 10 10"><circle cx="0" cy="0.7" r="2.9" fill="none" stroke="#c8c8c8" stroke-width="0.95"/><path d="M-1.1 -3.5h2.2M0 -3.4v1.2M0 0.7L1.2 -0.7" stroke="#c8c8c8" stroke-width="0.9"/></svg>
<span id="t55" style="left:31.7px;top:231px;font-size:7.4px;color:#a9a9a9;transform:translateY(0.29px) scaleX(0.8488) rotate(0.05deg);">Color</span>
<div style="left:105.4px;top:232.39200000000002px;width:12.8px;height:9px;background:#f02222;border:1px solid #6a6a6a;box-sizing:border-box;border-radius:1px;"></div>
<div style="left:120.6px;top:232.39200000000002px;width:13.2px;height:9px;background:#2a2a2a;border:1px solid #7a7a7a;box-sizing:border-box;border-radius:1.5px;"></div>
<svg style="left:121.2px;top:230.89200000000002px;" width="12" height="12" viewBox="-6.0 -6.0 12 12"><path d="M-4.4 -0.9H1.2V0.9H-4.4Z" fill="none" stroke="#d8d8d8" stroke-width="0.8"/><path d="M1.2 -1.6H3V1.6H1.2Z M3 -0.8H4.8V0.8H3Z" fill="#d8d8d8"/></svg>
<svg style="left:11.6px;top:242.87900000000002px;" width="8" height="8" viewBox="-4.0 -4.0 8 8"><path d="M-1 -2L1 0L-1 2" stroke="#9a9a9a" stroke-width="0.9" fill="none"/></svg>
<svg style="left:20.0px;top:241.579px;" width="10" height="10" viewBox="-5.0 -5.0 10 10"><circle cx="0" cy="0.7" r="2.9" fill="none" stroke="#c8c8c8" stroke-width="0.95"/><path d="M-1.1 -3.5h2.2M0 -3.4v1.2M0 0.7L1.2 -0.7" stroke="#c8c8c8" stroke-width="0.9"/></svg>
<span id="t56" style="left:31.7px;top:241px;font-size:7.4px;color:#a9a9a9;transform:translateY(0.38px) scaleX(0.8392) rotate(0.05deg);">Brush Size</span>
<span id="t57" style="left:106px;top:240px;font-size:7.4px;color:#2d8ceb;transform:translateY(0.98px) scaleX(0.7852) rotate(0.05deg);">34.4</span>
<svg style="left:11.6px;top:252.966px;" width="8" height="8" viewBox="-4.0 -4.0 8 8"><path d="M-1 -2L1 0L-1 2" stroke="#9a9a9a" stroke-width="0.9" fill="none"/></svg>
<svg style="left:20.0px;top:251.666px;" width="10" height="10" viewBox="-5.0 -5.0 10 10"><circle cx="0" cy="0.7" r="2.9" fill="none" stroke="#c8c8c8" stroke-width="0.95"/><path d="M-1.1 -3.5h2.2M0 -3.4v1.2M0 0.7L1.2 -0.7" stroke="#c8c8c8" stroke-width="0.9"/></svg>
<span id="t58" style="left:31.7px;top:251px;font-size:7.4px;color:#a9a9a9;transform:translateY(0.47px) scaleX(0.8491) rotate(0.05deg);">Brush Hardness</span>
<span id="t59" style="left:106px;top:251px;font-size:7.4px;color:#2d8ceb;transform:translateY(0.07px) scaleX(0.8015) rotate(0.05deg);">79</span>
<span id="t60" style="left:114.6px;top:251px;font-size:7.4px;color:#a9a9a9;transform:translateY(0.07px) scaleX(0.7297) rotate(0.05deg);">%</span>
<svg style="left:11.6px;top:263.053px;" width="8" height="8" viewBox="-4.0 -4.0 8 8"><path d="M-1 -2L1 0L-1 2" stroke="#9a9a9a" stroke-width="0.9" fill="none"/></svg>
<svg style="left:20.0px;top:261.753px;" width="10" height="10" viewBox="-5.0 -5.0 10 10"><circle cx="0" cy="0.7" r="2.9" fill="none" stroke="#c8c8c8" stroke-width="0.95"/><path d="M-1.1 -3.5h2.2M0 -3.4v1.2M0 0.7L1.2 -0.7" stroke="#c8c8c8" stroke-width="0.9"/></svg>
<span id="t61" style="left:31.7px;top:261px;font-size:7.4px;color:#a9a9a9;transform:translateY(0.55px) scaleX(0.8738) rotate(0.05deg);">Opacity</span>
<span id="t62" style="left:106px;top:261px;font-size:7.4px;color:#2d8ceb;transform:translateY(0.15px) scaleX(0.8108) rotate(0.05deg);">100.0</span>
<span id="t63" style="left:123px;top:261px;font-size:7.4px;color:#a9a9a9;transform:translateY(0.15px) scaleX(0.7297) rotate(0.05deg);">%</span>
<svg style="left:11.6px;top:273.14px;" width="8" height="8" viewBox="-4.0 -4.0 8 8"><path d="M-1 -2L1 0L-1 2" stroke="#9a9a9a" stroke-width="0.9" fill="none"/></svg>
<svg style="left:20.0px;top:271.84px;" width="10" height="10" viewBox="-5.0 -5.0 10 10"><circle cx="0" cy="0.7" r="2.9" fill="none" stroke="#c8c8c8" stroke-width="0.95"/><path d="M-1.1 -3.5h2.2M0 -3.4v1.2M0 0.7L1.2 -0.7" stroke="#c8c8c8" stroke-width="0.9"/></svg>
<span id="t64" style="left:31.7px;top:271px;font-size:7.4px;color:#a9a9a9;transform:translateY(0.64px) scaleX(0.8905) rotate(0.05deg);">Start</span>
<span id="t65" style="left:106px;top:271px;font-size:7.4px;color:#2d8ceb;transform:translateY(0.24px) scaleX(0.7781) rotate(0.05deg);">0.0</span>
<span id="t66" style="left:116px;top:271px;font-size:7.4px;color:#a9a9a9;transform:translateY(0.24px) scaleX(0.7297) rotate(0.05deg);">%</span>
<svg style="left:11.6px;top:283.22700000000003px;" width="8" height="8" viewBox="-4.0 -4.0 8 8"><path d="M-1 -2L1 0L-1 2" stroke="#9a9a9a" stroke-width="0.9" fill="none"/></svg>
<svg style="left:20.0px;top:281.927px;" width="10" height="10" viewBox="-5.0 -5.0 10 10"><circle cx="0" cy="0.7" r="2.9" fill="none" stroke="#c8c8c8" stroke-width="0.95"/><path d="M-1.1 -3.5h2.2M0 -3.4v1.2M0 0.7L1.2 -0.7" stroke="#c8c8c8" stroke-width="0.9"/></svg>
<span id="t67" style="left:31.7px;top:281px;font-size:7.4px;color:#a9a9a9;transform:translateY(0.73px) scaleX(0.8133) rotate(0.05deg);">End</span>
<span id="t68" style="left:106px;top:281px;font-size:7.4px;color:#2d8ceb;transform:translateY(0.33px) scaleX(0.8061) rotate(0.05deg);">27.0</span>
<span id="t69" style="left:119.6px;top:281px;font-size:7.4px;color:#a9a9a9;transform:translateY(0.33px) scaleX(0.7297) rotate(0.05deg);">%</span>
<svg style="left:11.6px;top:293.314px;" width="8" height="8" viewBox="-4.0 -4.0 8 8"><path d="M-1 -2L1 0L-1 2" stroke="#9a9a9a" stroke-width="0.9" fill="none"/></svg>
<svg style="left:20.0px;top:292.014px;" width="10" height="10" viewBox="-5.0 -5.0 10 10"><circle cx="0" cy="0.7" r="2.9" fill="none" stroke="#c8c8c8" stroke-width="0.95"/><path d="M-1.1 -3.5h2.2M0 -3.4v1.2M0 0.7L1.2 -0.7" stroke="#c8c8c8" stroke-width="0.9"/></svg>
<span id="t70" style="left:31.7px;top:291px;font-size:7.4px;color:#a9a9a9;transform:translateY(0.81px) scaleX(0.8346) rotate(0.05deg);">Spacing</span>
<span id="t71" style="left:106px;top:291px;font-size:7.4px;color:#2d8ceb;transform:translateY(0.41px) scaleX(0.8108) rotate(0.05deg);">15.00</span>
<span id="t72" style="left:123px;top:291px;font-size:7.4px;color:#a9a9a9;transform:translateY(0.41px) scaleX(0.7297) rotate(0.05deg);">%</span>
<svg style="left:20.0px;top:302.101px;" width="10" height="10" viewBox="-5.0 -5.0 10 10"><circle cx="0" cy="0.7" r="2.9" fill="none" stroke="#c8c8c8" stroke-width="0.95"/><path d="M-1.1 -3.5h2.2M0 -3.4v1.2M0 0.7L1.2 -0.7" stroke="#c8c8c8" stroke-width="0.9"/></svg>
<span id="t73" style="left:31.7px;top:301px;font-size:7.4px;color:#a9a9a9;transform:translateY(0.90px) scaleX(0.8969) rotate(0.05deg);">Paint Style</span>
<div style="left:106px;top:303.401px;width:70px;height:8px;background:#1c1c1c;border-radius:1.5px;box-shadow:0 0 0 0.6px #2f2f2f;"></div>
<span id="t74" style="left:110.3px;top:302px;font-size:7.4px;color:#d0d0d0;transform:translateY(0.00px) scaleX(0.8819) rotate(0.05deg);">On Original Image</span>
<svg style="left:167.2px;top:303.601px;" width="8" height="8" viewBox="-4.0 -4.0 8 8"><path d="M-2.3 -1.1L0 1.1L2.3 -1.1" stroke="#b0b0b0" stroke-width="0.85" fill="none"/></svg>
<svg style="left:198.3px;top:47.4px;" width="6" height="6" viewBox="-3.0 -3.0 6 6"><path d="M-1.6 -1.6L1.6 1.6M1.6 -1.6L-1.6 1.6" stroke="#8a8a8a" stroke-width="0.8"/></svg>
<svg style="left:208px;top:47px" width="7" height="6"><rect x="0.50" y="0.00" width="6.00" height="6.00" fill="#c9a877"/></svg>
<svg style="left:211px;top:47px" width="1" height="6"><rect x="0.20" y="0.00" width="0.60" height="6.00" fill="#a88a5c"/></svg>
<svg style="left:208px;top:49px" width="7" height="2"><rect x="0.50" y="0.80" width="6.00" height="0.60" fill="#a88a5c"/></svg>
<svg style="left:219.5px;top:46.0px;" width="8" height="8" viewBox="-4.0 -4.0 8 8"><g transform="translate(0,-0.4) scale(0.86)"><path d="M-1.6 -0.4V-2A1.4 1.4 0 0 1 1.2 -2.4" stroke="#cfcfcf" stroke-width="0.9" fill="none"/><rect x="-2.4" y="-0.6" width="4.8" height="3.6" fill="#cfcfcf"/><rect x="-0.5" y="0.4" width="1" height="1.4" fill="#232323"/></g></svg>
<span id="t75" style="left:232.5px;top:44px;font-size:7.4px;color:#d2d2d2;transform:translateY(0.90px) scaleX(0.8788) rotate(0.05deg);">Composition</span>
<span id="t76" style="left:271.3px;top:44px;font-size:7.4px;color:#2d8ceb;transform:translateY(0.90px) scaleX(0.8381) rotate(0.05deg);">Comp 1</span>
<svg style="left:299px;top:48px" width="6" height="1"><rect x="0.00" y="0.00" width="5.40" height="1.00" fill="#b5b5b5"/></svg>
<svg style="left:299px;top:50px" width="6" height="1"><rect x="0.00" y="0.00" width="5.40" height="1.00" fill="#b5b5b5"/></svg>
<svg style="left:299px;top:52px" width="6" height="1"><rect x="0.00" y="0.00" width="5.40" height="1.00" fill="#b5b5b5"/></svg>
<svg style="left:199px;top:56px" width="106" height="2"><rect x="0.80" y="0.00" width="104.40" height="1.60" fill="#b9b9b9"/></svg>
<span id="t77" style="left:326.4px;top:44px;font-size:7.4px;color:#8f8f8f;transform:translateY(0.90px) scaleX(0.9378) rotate(0.05deg);">Layer (none)</span>
<div style="left:205.2px;top:60.4px;width:41.5px;height:9px;background:#1a1a1a;border-radius:1px;"></div>
<span id="t78" style="left:211px;top:59px;font-size:7.4px;color:#2d8ceb;transform:translateY(0.50px) scaleX(0.8343) rotate(0.05deg);">Comp 1</span>
<svg style="left:194px;top:72px" width="672" height="2"><rect x="0.00" y="0.00" width="672.00" height="1.30" fill="#181818"/></svg>
<svg style="left:194px;top:387px" width="672" height="2"><rect x="0.00" y="0.60" width="672.00" height="0.80" fill="#1b1b1b"/></svg>
<svg style="left:267px;top:74px" width="572" height="312"><rect x="0.20" y="0.00" width="571.40" height="311.70" fill="#ebf8ff"/></svg>
<svg style="left:267.2px;top:74px;" width="571.4" height="311.7" viewBox="267.2 74 571.4 311.7">
<defs><filter id="bl" x="-10%" y="-10%" width="120%" height="120%"><feGaussianBlur stdDeviation="0.7"/></filter></defs>
<g filter="url(#bl)" fill="none" stroke="#fb2222" stroke-width="17.4" stroke-linecap="round" stroke-linejoin="round">
<path d="M419.3 200L415.4 256.1L471.4 264.9"/>
<path d="M606.8 187.5L720.3 197.6"/>
</g>
<path d="M389.2 189.8L385 246.1L556.1 272.5L606.8 187.5L720.3 197.6" fill="none" stroke="#33432d" stroke-width="1.05"/>
<path d="M419 200L414.9 256.4L586 282.6L636.7 197.6L750 207.5" fill="none" stroke="#3355d8" stroke-width="1.05"/>
<g fill="#13300f"><circle cx="389.2" cy="189.8" r="1.9"/><circle cx="385" cy="246.1" r="1.9"/><circle cx="556.1" cy="272.5" r="1.9"/><circle cx="606.8" cy="187.5" r="1.9"/><circle cx="720.3" cy="197.6" r="1.3"/></g>
<circle cx="720.3" cy="197.6" r="2.6" fill="none" stroke="#3a2a1a" stroke-width="0.7"/>
<g fill="#1d3fd0"><circle cx="419" cy="200" r="1.3"/><circle cx="414.9" cy="256.4" r="1.9"/><circle cx="586" cy="282.6" r="1.9"/><circle cx="636.7" cy="197.6" r="1.9"/><circle cx="750" cy="207.5" r="1.9"/></g>
<circle cx="419" cy="200" r="2.6" fill="none" stroke="#5a48e0" stroke-width="0.7"/>
<g stroke="#c84848" stroke-width="0.8" fill="none"><circle cx="553.1" cy="230.8" r="2.4"/><path d="M553.1 226.4v2M553.1 233.2v2M548.7 230.8h2M555.5 230.8h2"/></g>
</svg>
<svg style="left:266px;top:229px" width="3" height="4"><rect x="0.00" y="0.40" width="3.00" height="3.00" fill="#c03a3a"/></svg>
<svg style="left:837px;top:229px" width="3" height="4"><rect x="0.00" y="0.40" width="3.00" height="3.00" fill="#c03a3a"/></svg>
<div style="left:196.6px;top:390.8px;width:40.4px;height:9.6px;background:#1c1c1c;border-radius:1.5px;box-shadow:0 0 0 0.6px #2f2f2f;"></div>
<span id="t79" style="left:200.2px;top:390px;font-size:7.4px;color:#bdbdbd;transform:translateY(0.20px) scaleX(0.9056) rotate(0.05deg);">50%</span>
<svg style="left:228.4px;top:391.8px;" width="8" height="8" viewBox="-4.0 -4.0 8 8"><path d="M-2.3 -1.1L0 1.1L2.3 -1.1" stroke="#b0b0b0" stroke-width="0.85" fill="none"/></svg>
<div style="left:244.4px;top:390.8px;width:50.4px;height:9.6px;background:#1c1c1c;border-radius:1.5px;box-shadow:0 0 0 0.6px #2f2f2f;"></div>
<span id="t80" style="left:248.0px;top:390px;font-size:7.4px;color:#bdbdbd;transform:translateY(0.20px) scaleX(0.8723) rotate(0.05deg);">Full</span>
<svg style="left:286.2px;top:391.8px;" width="8" height="8" viewBox="-4.0 -4.0 8 8"><path d="M-2.3 -1.1L0 1.1L2.3 -1.1" stroke="#b0b0b0" stroke-width="0.85" fill="none"/></svg>
<svg style="left:241px;top:391px" width="1" height="9"><rect x="0.00" y="0.60" width="0.70" height="8.00" fill="#363636"/></svg>
<svg style="left:296px;top:391px" width="2" height="9"><rect x="0.60" y="0.60" width="0.70" height="8.00" fill="#363636"/></svg>
<svg style="left:366px;top:391px" width="2" height="9"><rect x="0.60" y="0.60" width="0.70" height="8.00" fill="#363636"/></svg>
<svg style="left:419px;top:391px" width="2" height="9"><rect x="0.60" y="0.60" width="0.70" height="8.00" fill="#363636"/></svg>
<svg style="left:454px;top:391px" width="2" height="9"><rect x="0.60" y="0.60" width="0.70" height="8.00" fill="#363636"/></svg>
<svg style="left:302.6px;top:390.3px;" width="10" height="10" viewBox="-5.0 -5.0 10 10"><rect x="-3.6" y="-3" width="7.2" height="5.6" fill="none" stroke="#cfcfcf" stroke-width="0.9"/><path d="M-1.4 0.6L0.2 -1.8L1 0L2.2 -0.4" stroke="#cfcfcf" stroke-width="0.8" fill="none"/><path d="M3 4h1.2v-1.2z" fill="#cfcfcf"/></svg>
<svg style="left:315.6px;top:390.3px;" width="10" height="10" viewBox="-5.0 -5.0 10 10"><rect x="-3.6" y="-3" width="7.2" height="6" fill="none" stroke="#cfcfcf" stroke-width="0.9"/><path d="M-2 -1.4h1.4v1.4h-1.4zM0.6 -1.4h1.4v1.4h-1.4zM-0.7 0h1.4v1.4h-1.4z" fill="#cfcfcf"/></svg>
<svg style="left:329.0px;top:390.3px;" width="10" height="10" viewBox="-5.0 -5.0 10 10"><path d="M-3 -2.6L3.4 -3.4L2.8 3L-3.6 3Z" fill="none" stroke="#2d8ceb" stroke-width="0.9"/><rect x="-4" y="-3.6" width="1.8" height="1.8" fill="#2d8ceb"/><rect x="2.4" y="-4.2" width="1.8" height="1.8" fill="#2d8ceb"/><rect x="-4.4" y="2.2" width="1.8" height="1.8" fill="#2d8ceb"/><rect x="2" y="2.2" width="1.8" height="1.8" fill="#2d8ceb"/></svg>
<svg style="left:342.0px;top:390.3px;" width="10" height="10" viewBox="-5.0 -5.0 10 10"><rect x="-3.8" y="-3" width="7.6" height="6" rx="1" fill="none" stroke="#cfcfcf" stroke-width="0.9"/><rect x="-1.6" y="-1.2" width="3.2" height="2.4" fill="#cfcfcf"/></svg>
<svg style="left:354.6px;top:390.0px;" width="10" height="10" viewBox="-5.0 -5.0 10 10"><rect x="-3.6" y="-3.4" width="7.2" height="5.2" fill="none" stroke="#cfcfcf" stroke-width="0.9"/><path d="M0 -2.2V0.6M-2 -0.8H2" stroke="#cfcfcf" stroke-width="0.8"/><path d="M1.6 3h2.4l-1.2 1.4z" fill="#cfcfcf"/></svg>
<svg style="left:373.0px;top:389.3px;" width="12" height="12" viewBox="-6.0 -6.0 12 12"><circle cx="0" cy="-1.4" r="2" fill="#e03030"/><circle cx="-1.6" cy="1.2" r="2" fill="#30b030"/><circle cx="1.6" cy="1.2" r="2" fill="#3060e0"/><path d="M2.2 4.2h2.2l-1.1 1.2z" fill="#cfcfcf"/></svg>
<svg style="left:387.6px;top:390.3px;" width="10" height="10" viewBox="-5.0 -5.0 10 10"><circle cx="0" cy="0" r="2.6" fill="none" stroke="#cfcfcf" stroke-width="1.5"/><path d="M-1 -3L1.6 -0.4M3 -1L0.4 1.6M1 3L-1.6 0.4M-3 1L-0.4 -1.6" stroke="#232323" stroke-width="0.5"/></svg>
<span id="t81" style="left:400.6px;top:390px;font-size:7.4px;color:#2d8ceb;transform:translateY(0.10px) scaleX(0.8360) rotate(0.05deg);">+0.0</span>
<svg style="left:426.4px;top:390.5px;" width="10" height="10" viewBox="-5.0 -5.0 10 10"><path d="M-3.6 -1.8H-1.6L-0.8 -3H0.8L1.6 -1.8H3.6V3H-3.6Z" fill="#b5b5b5"/><circle cx="0" cy="0.5" r="1.5" fill="#232323"/></svg>
<svg style="left:440.0px;top:390.3px;" width="10" height="10" viewBox="-5.0 -5.0 10 10"><path d="M-3.4 1.6C-4 0-2.4-1.6-0.8-1L0.6 0.4M3.4 -1.6C4 0 2.4 1.6 0.8 1L-0.6 -0.4" stroke="#3f3f3f" stroke-width="1.1" fill="none"/></svg>
<div style="left:458.2px;top:390.8px;width:40.4px;height:9.6px;background:#1c1c1c;border-radius:1.5px;box-shadow:0 0 0 0.6px #2f2f2f;"></div>
<span id="t82" style="left:462.6px;top:390px;font-size:7.4px;color:#a9a9a9;transform:translateY(0.20px) scaleX(0.8701) rotate(0.05deg);">0:00:00:00</span>
<span id="t83" style="left:876.5px;top:44px;font-size:7.4px;color:#a2a2a2;transform:translateY(0.60px) scaleX(0.9004) rotate(0.05deg);">Info</span>
<span id="t84" style="left:876.5px;top:62px;font-size:7.4px;color:#a2a2a2;transform:translateY(0.30px) scaleX(0.8833) rotate(0.05deg);">Audio</span>
<span id="t85" style="left:876.5px;top:80px;font-size:7.4px;color:#a2a2a2;transform:translateY(0.10px) scaleX(0.9241) rotate(0.05deg);">Preview</span>
<span id="t86" style="left:876.5px;top:98px;font-size:7.4px;color:#a2a2a2;transform:translateY(0.10px) scaleX(0.8681) rotate(0.05deg);">Effects &amp; Presets</span>
<span id="t87" style="left:876.5px;top:115px;font-size:7.4px;color:#a2a2a2;transform:translateY(0.90px) scaleX(0.9430) rotate(0.05deg);">Align</span>
<span id="t88" style="left:876.5px;top:133px;font-size:7.4px;color:#a2a2a2;transform:translateY(0.90px) scaleX(0.8997) rotate(0.05deg);">Libraries</span>
<svg style="left:869px;top:57px" width="122" height="3"><rect x="0.20" y="0.90" width="121.80" height="1.20" fill="#171717"/></svg>
<svg style="left:869px;top:75px" width="122" height="2"><rect x="0.20" y="0.70" width="121.80" height="1.20" fill="#171717"/></svg>
<svg style="left:869px;top:93px" width="122" height="2"><rect x="0.20" y="0.50" width="121.80" height="1.20" fill="#171717"/></svg>
<svg style="left:869px;top:111px" width="122" height="2"><rect x="0.20" y="0.30" width="121.80" height="1.20" fill="#171717"/></svg>
<svg style="left:869px;top:129px" width="122" height="2"><rect x="0.20" y="0.10" width="121.80" height="1.20" fill="#171717"/></svg>
<svg style="left:869px;top:146px" width="122" height="3"><rect x="0.20" y="0.90" width="121.80" height="1.20" fill="#171717"/></svg>
<span id="t89" style="left:876.4px;top:151px;font-size:7.4px;color:#d4d4d4;transform:translateY(0.90px) scaleX(0.8813) rotate(0.05deg);">Character</span>
<svg style="left:980px;top:155px" width="6" height="1"><rect x="0.00" y="0.00" width="5.40" height="1.00" fill="#b5b5b5"/></svg>
<svg style="left:980px;top:157px" width="6" height="1"><rect x="0.00" y="0.00" width="5.40" height="1.00" fill="#b5b5b5"/></svg>
<svg style="left:980px;top:159px" width="6" height="1"><rect x="0.00" y="0.00" width="5.40" height="1.00" fill="#b5b5b5"/></svg>
<div style="left:872.6px;top:171.2px;width:60.199999999999996px;height:10.4px;background:#1b1b1b;border-radius:1.5px 0 0 1.5px;box-shadow:0 0 0 0.6px #2e2e2e;"></div>
<div style="left:934.6px;top:171.2px;width:9.8px;height:10.4px;background:#262626;border-radius:0 1.5px 1.5px 0;box-shadow:0 0 0 0.7px #1b1b1b;"></div>
<span id="t90" style="left:876.6px;top:170px;font-size:7.4px;color:#d6d6d6;transform:translateY(1.00px) scaleX(0.8951) rotate(0.05deg);">Times New Roman</span>
<svg style="left:935.5px;top:172.59999999999997px;" width="8" height="8" viewBox="-4.0 -4.0 8 8"><path d="M-2.3 -1.1L0 1.1L2.3 -1.1" stroke="#b5b5b5" stroke-width="0.85" fill="none"/></svg>
<div style="left:872.6px;top:185.6px;width:60.199999999999996px;height:10.2px;background:#1b1b1b;border-radius:1.5px 0 0 1.5px;box-shadow:0 0 0 0.6px #2e2e2e;"></div>
<div style="left:934.6px;top:185.6px;width:9.8px;height:10.2px;background:#262626;border-radius:0 1.5px 1.5px 0;box-shadow:0 0 0 0.7px #1b1b1b;"></div>
<span id="t91" style="left:876.6px;top:185px;font-size:7.4px;color:#d6d6d6;transform:translateY(0.30px) scaleX(0.8884) rotate(0.05deg);">Regular</span>
<svg style="left:935.5px;top:186.89999999999998px;" width="8" height="8" viewBox="-4.0 -4.0 8 8"><path d="M-2.3 -1.1L0 1.1L2.3 -1.1" stroke="#b5b5b5" stroke-width="0.85" fill="none"/></svg>
<svg style="left:947.0px;top:170.4px;" width="12" height="12" viewBox="-6.0 -6.0 12 12"><path d="M3.8 -4.6L4.8 -3.6C5.2 -3 4.8 -2.2 4.2 -1.8L3 -0.6L0.8 -2.8L2 -4C2.4 -4.6 3.2 -5 3.8 -4.6Z" fill="#d2d2d2"/><path d="M0.6 -2L2.2 -0.4L-2.6 4.4L-4.4 4.8L-4.2 2.8Z" fill="none" stroke="#d2d2d2" stroke-width="0.9"/></svg>
<div style="left:970.4px;top:178.5px;width:16.8px;height:16.9px;background:#1c1c1c;border:5.4px solid #f4f4f4;box-sizing:border-box;"></div>
<svg style="left:963px;top:171px;" width="26" height="26" viewBox="963 171 26 26"><path d="M970.6 195.3L987.2 178.6" stroke="#e81818" stroke-width="1.4"/></svg>
<div style="left:963px;top:171px;width:16.2px;height:16px;background:#e8e8e8;border:1px solid #fbfbfb;box-sizing:border-box;"></div>
<svg style="left:978.6px;top:169.8px;" width="10" height="10" viewBox="-5.0 -5.0 10 10"><path d="M-2 -2.2H0.4A2.2 2.2 0 0 1 2.6 0V2" fill="none" stroke="#d2d2d2" stroke-width="0.9"/><path d="M-3.6 -2.2L-1.4 -3.8V-0.6Z M2.6 3.4L1 1.4H4.2Z" fill="#d2d2d2"/></svg>
<svg style="left:947px;top:185px" width="12" height="10"><rect x="0.10" y="0.20" width="11.90" height="9.80" fill="#f6f6f6"/></svg>
<svg style="left:947px;top:186px" width="12" height="4"><rect x="0.90" y="0.00" width="10.30" height="3.90" fill="#000000"/></svg>
<svg style="left:963px;top:188px" width="6" height="7"><rect x="0.00" y="0.20" width="6.00" height="6.50" fill="#f2f2f2"/></svg>
<svg style="left:963px;top:188.2px;" width="6" height="6.5" viewBox="0 0 6 6.5"><path d="M0 6.5L6 0" stroke="#e88a8a" stroke-width="0.9"/></svg>
<svg style="left:872px;top:199px" width="116" height="2"><rect x="0.00" y="0.10" width="115.40" height="1.00" fill="#323232"/></svg>
<svg style="left:872px;top:228px" width="116" height="2"><rect x="0.00" y="0.50" width="115.40" height="1.00" fill="#323232"/></svg>
<svg style="left:872px;top:246px" width="116" height="2"><rect x="0.00" y="0.50" width="115.40" height="1.00" fill="#323232"/></svg>
<svg style="left:872px;top:278px" width="116" height="2"><rect x="0.00" y="0.20" width="115.40" height="1.00" fill="#323232"/></svg>
<span style="left:871.6px;top:203.50px;font-family:'Liberation Serif',serif;font-size:6.5px;line-height:7.80px;color:#d2d2d2;font-weight:bold;">T</span>
<span style="left:875.6px;top:200.60px;font-family:'Liberation Serif',serif;font-size:10px;line-height:12.00px;color:#d2d2d2;font-weight:bold;">T</span>
<span id="t92" style="left:886.4px;top:201px;font-size:7.4px;color:#2d8ceb;transform:translateY(0.10px) scaleX(0.9230) rotate(0.05deg);">36</span>
<span id="t93" style="left:896.2px;top:201px;font-size:7.4px;color:#a9a9a9;transform:translateY(0.10px) scaleX(0.8704) rotate(0.05deg);">px</span>
<svg style="left:912.0px;top:204.2px;" width="6" height="6" viewBox="-3.0 -3.0 6 6"><path d="M-1.7 -1.4H1.7L0 1.6Z" fill="#b5b5b5"/></svg>
<svg style="left:933.0px;top:200.8px;" width="12" height="12" viewBox="-6.0 -6.0 12 12"><path d="M-3.8 4.2H3.8M-3.8 -4.2H3.8" stroke="#d2d2d2" stroke-width="0.8"/><path d="M-3 3.4L0 -2.6L3 3.4M-1.8 1.4H1.8" stroke="#d2d2d2" stroke-width="0.9" fill="none"/><path d="M0 -4v1.6" stroke="#d2d2d2" stroke-width="0.8"/></svg>
<span id="t94" style="left:953.7px;top:201px;font-size:7.4px;color:#2d8ceb;transform:translateY(0.30px) scaleX(0.9068) rotate(0.05deg);">Auto</span>
<svg style="left:979.0px;top:204.2px;" width="6" height="6" viewBox="-3.0 -3.0 6 6"><path d="M-1.7 -1.4H1.7L0 1.6Z" fill="#b5b5b5"/></svg>
<svg style="left:871.4px;top:213.0px;" width="12" height="12" viewBox="-6.0 -6.0 12 12"><path d="M-5 -3L-3 2.4L-1 -3M-0.6 2.4L1.6 -3L3.8 2.4M0.2 0.8H3" stroke="#d2d2d2" stroke-width="0.9" fill="none"/><path d="M-4 4.2H3.6M-4 4.2l1.2-1M-4 4.2l1.2 1" stroke="#d2d2d2" stroke-width="0.7" fill="none"/></svg>
<span id="t95" style="left:887px;top:213px;font-size:7.4px;color:#555555;transform:translateY(0.30px) scaleX(0.9233) rotate(0.05deg);">Metrics</span>
<svg style="left:912.0px;top:216.0px;" width="6" height="6" viewBox="-3.0 -3.0 6 6"><path d="M-1.7 -1.4H1.7L0 1.6Z" fill="#b5b5b5"/></svg>
<svg style="left:934px;top:214px" width="11" height="8"><rect x="0.20" y="0.80" width="10.20" height="6.80" fill="#d2d2d2"/></svg>
<span id="t96" style="left:934.8px;top:212px;font-size:6.4px;color:#222222;transform:translateY(0.67px) scaleX(1.0706) rotate(0.05deg);font-weight:bold;">VA</span>
<svg style="left:933.2px;top:217.4px;" width="12" height="12" viewBox="-6.0 -6.0 12 12"><path d="M-4.6 0H4.6M-4.6 0l1.2-1M-4.6 0l1.2 1M4.6 0l-1.2-1M4.6 0l-1.2 1" stroke="#d2d2d2" stroke-width="0.7" fill="none"/></svg>
<span id="t97" style="left:953.7px;top:212px;font-size:7.4px;color:#2d8ceb;transform:translateY(0.90px) scaleX(0.8970) rotate(0.05deg);">0</span>
<svg style="left:979.0px;top:216.0px;" width="6" height="6" viewBox="-3.0 -3.0 6 6"><path d="M-1.7 -1.4H1.7L0 1.6Z" fill="#b5b5b5"/></svg>
<svg style="left:871.2px;top:231.8px;" width="12" height="12" viewBox="-6.0 -6.0 12 12"><path d="M-4.4 -3H4.4M-4.4 -0.2H4.4M-4.4 2.6H4.4" stroke="#d2d2d2" stroke-width="1.4"/></svg>
<span id="t98" style="left:887px;top:232px;font-size:7.4px;color:#2d8ceb;transform:translateY(0.10px) scaleX(0.9722) rotate(0.05deg);">-</span>
<span id="t99" style="left:892.6px;top:232px;font-size:7.4px;color:#a9a9a9;transform:translateY(0.10px) scaleX(0.8704) rotate(0.05deg);">px</span>
<svg style="left:912.0px;top:234.6px;" width="6" height="6" viewBox="-3.0 -3.0 6 6"><path d="M-1.7 -1.4H1.7L0 1.6Z" fill="#b5b5b5"/></svg>
<div style="left:920.8px;top:232.6px;width:66.6px;height:10.4px;background:#1b1b1b;border-radius:1.5px;box-shadow:0 0 0 0.6px #303030;"></div>
<svg style="left:978.5px;top:233.99999999999997px;" width="8" height="8" viewBox="-4.0 -4.0 8 8"><path d="M-2.3 -1.1L0 1.1L2.3 -1.1" stroke="#b5b5b5" stroke-width="0.85" fill="none"/></svg>
<span style="left:876.4px;top:249.00px;font-family:'Liberation Serif',serif;font-size:11px;line-height:13.20px;color:#d2d2d2;font-weight:bold;">T</span>
<svg style="left:868.6px;top:250.6px;" width="10" height="10" viewBox="-5.0 -5.0 10 10"><path d="M0 -4V4M0 -4.4l-1.2 1.4M0 -4.4l1.2 1.4M0 4.4l-1.2-1.4M0 4.4l1.2-1.4" stroke="#d2d2d2" stroke-width="0.7" fill="none"/></svg>
<span id="t100" style="left:886.6px;top:249px;font-size:7.4px;color:#2d8ceb;transform:translateY(0.50px) scaleX(0.8749) rotate(0.05deg);">100</span>
<span id="t101" style="left:899.6px;top:249px;font-size:7.4px;color:#a9a9a9;transform:translateY(0.50px) scaleX(0.8209) rotate(0.05deg);">%</span>
<svg style="left:912.0px;top:252.6px;" width="6" height="6" viewBox="-3.0 -3.0 6 6"><path d="M-1.7 -1.4H1.7L0 1.6Z" fill="#b5b5b5"/></svg>
<span style="left:935.4px;top:248.10px;font-family:'Liberation Serif',serif;font-size:10.5px;line-height:12.60px;color:#d2d2d2;font-weight:bold;">T</span>
<svg style="left:933.2px;top:254.60000000000002px;" width="12" height="12" viewBox="-6.0 -6.0 12 12"><path d="M-4 0H4M-4 0l1.2-1M-4 0l1.2 1M4 0l-1.2-1M4 0l-1.2 1" stroke="#d2d2d2" stroke-width="0.7" fill="none"/></svg>
<span id="t102" style="left:953.2px;top:249px;font-size:7.4px;color:#2d8ceb;transform:translateY(0.90px) scaleX(0.8749) rotate(0.05deg);">100</span>
<span id="t103" style="left:966.2px;top:249px;font-size:7.4px;color:#a9a9a9;transform:translateY(0.90px) scaleX(0.8209) rotate(0.05deg);">%</span>
<svg style="left:979.0px;top:252.8px;" width="6" height="6" viewBox="-3.0 -3.0 6 6"><path d="M-1.7 -1.4H1.7L0 1.6Z" fill="#b5b5b5"/></svg>
<span id="t104" style="left:871.6px;top:262px;font-size:8px;color:#cfcfcf;transform:translateY(0.76px) scaleX(1.0105) rotate(0.05deg);">A</span>
<span id="t105" style="left:877px;top:264px;font-size:6.4px;color:#cfcfcf;transform:translateY(0.27px) scaleX(1.0105) rotate(0.05deg);font-style:italic;">a</span>
<svg style="left:876.4px;top:263.6px;" width="10" height="10" viewBox="-5.0 -5.0 10 10"><path d="M0 -3.6V3.6M0 -4l-1.1 1.3M0 -4l1.1 1.3M0 4l-1.1-1.3M0 4l1.1-1.3" stroke="#d2d2d2" stroke-width="0.7" fill="none"/></svg>
<span id="t106" style="left:886.6px;top:262px;font-size:7.4px;color:#2d8ceb;transform:translateY(0.30px) scaleX(0.9212) rotate(0.05deg);">0</span>
<span id="t107" style="left:892.8px;top:262px;font-size:7.4px;color:#a9a9a9;transform:translateY(0.30px) scaleX(0.8704) rotate(0.05deg);">px</span>
<svg style="left:912.0px;top:265.2px;" width="6" height="6" viewBox="-3.0 -3.0 6 6"><path d="M-1.7 -1.4H1.7L0 1.6Z" fill="#b5b5b5"/></svg>
<svg style="left:933.2px;top:261.0px;" width="12" height="12" viewBox="-6.0 -6.0 12 12"><rect x="-3.4" y="-3" width="6.8" height="5.4" fill="none" stroke="#8a8a8a" stroke-width="0.8" stroke-dasharray="1.2 0.8"/><path d="M-1.6 1.6L0 -2L1.6 1.6" stroke="#d2d2d2" stroke-width="0.8" fill="none"/></svg>
<svg style="left:933.2px;top:266.6px;" width="12" height="12" viewBox="-6.0 -6.0 12 12"><path d="M-4 0H4M-4 0l1.2-1M-4 0l1.2 1M4 0l-1.2-1M4 0l-1.2 1" stroke="#d2d2d2" stroke-width="0.7" fill="none"/></svg>
<span id="t108" style="left:953.2px;top:261px;font-size:7.4px;color:#2d8ceb;transform:translateY(0.90px) scaleX(0.9212) rotate(0.05deg);">0</span>
<span id="t109" style="left:959.4px;top:261px;font-size:7.4px;color:#a9a9a9;transform:translateY(0.90px) scaleX(0.8209) rotate(0.05deg);">%</span>
<svg style="left:979.0px;top:265.2px;" width="6" height="6" viewBox="-3.0 -3.0 6 6"><path d="M-1.7 -1.4H1.7L0 1.6Z" fill="#b5b5b5"/></svg>
<span style="left:887.2px;top:281.90px;font-family:'Liberation Serif',serif;font-size:9.5px;line-height:11.40px;color:#d2d2d2;font-weight:bold;">T</span>
<span style="left:902.6px;top:281.90px;font-family:'Liberation Serif',serif;font-size:9.5px;line-height:11.40px;color:#d2d2d2;font-style:italic;">T</span>
<span style="left:917.8px;top:281.90px;font-family:'Liberation Serif',serif;font-size:9.5px;line-height:11.40px;color:#d2d2d2;letter-spacing:-0.3px;">TT</span>
<span style="left:933px;top:281.90px;font-family:'Liberation Serif',serif;font-size:9.5px;line-height:11.40px;color:#d2d2d2;">T</span>
<span style="left:938.8px;top:284.08px;font-family:'Liberation Serif',serif;font-size:7.2px;line-height:8.64px;color:#d2d2d2;">T</span>
<span style="left:952.2px;top:281.90px;font-family:'Liberation Serif',serif;font-size:9.5px;line-height:11.40px;color:#d2d2d2;">T</span>
<span style="left:958.2px;top:282.40px;font-family:'Liberation Serif',serif;font-size:5px;line-height:6.00px;color:#d2d2d2;">1</span>
<span style="left:967.4px;top:281.90px;font-family:'Liberation Serif',serif;font-size:9.5px;line-height:11.40px;color:#d2d2d2;">T</span>
<span style="left:973.2px;top:287.40px;font-family:'Liberation Serif',serif;font-size:5px;line-height:6.00px;color:#d2d2d2;">1</span>
<div style="left:875.4px;top:300.4px;width:7.2px;height:7.2px;background:transparent;border:1px solid #8f8f8f;border-radius:1px;box-sizing:border-box;"></div>
<span id="t110" style="left:886.4px;top:298px;font-size:7.4px;color:#a2a2a2;transform:translateY(0.50px) scaleX(0.8847) rotate(0.05deg);">Ligatures</span>
<div style="left:934px;top:300.4px;width:7.2px;height:7.2px;background:transparent;border:1px solid #8f8f8f;border-radius:1px;box-sizing:border-box;"></div>
<span id="t111" style="left:944.4px;top:298px;font-size:7.4px;color:#a2a2a2;transform:translateY(0.50px) scaleX(0.9173) rotate(0.05deg);">Hindi Digits</span>
<svg style="left:869px;top:327px" width="122" height="2"><rect x="0.20" y="0.40" width="121.60" height="1.20" fill="#171717"/></svg>
<svg style="left:869px;top:344px" width="122" height="2"><rect x="0.20" y="0.70" width="121.60" height="1.20" fill="#171717"/></svg>
<svg style="left:869px;top:362px" width="122" height="2"><rect x="0.20" y="0.80" width="121.60" height="1.20" fill="#171717"/></svg>
<svg style="left:869px;top:380px" width="122" height="3"><rect x="0.20" y="0.90" width="121.60" height="1.20" fill="#171717"/></svg>
<span id="t112" style="left:876.6px;top:332px;font-size:7.4px;color:#a2a2a2;transform:translateY(0.00px) scaleX(0.8808) rotate(0.05deg);">Paragraph</span>
<span id="t113" style="left:876.6px;top:349px;font-size:7.4px;color:#a2a2a2;transform:translateY(0.80px) scaleX(0.8878) rotate(0.05deg);">Tracker</span>
<span id="t114" style="left:876.6px;top:367px;font-size:7.4px;color:#a2a2a2;transform:translateY(0.50px) scaleX(0.9133) rotate(0.05deg);">Content-Aware Fill</span>
<svg style="left:0px;top:404px" width="999" height="203"><rect x="0.00" y="0.10" width="999.00" height="202.90" fill="#2d5c99"/></svg>
<svg style="left:1px;top:405px" width="997" height="201"><rect x="0.50" y="0.90" width="996.00" height="199.80" fill="#232323"/></svg>
<svg style="left:5.699999999999999px;top:410.0px;" width="6" height="6" viewBox="-3.0 -3.0 6 6"><path d="M-1.6 -1.6L1.6 1.6M1.6 -1.6L-1.6 1.6" stroke="#8a8a8a" stroke-width="0.8"/></svg>
<svg style="left:16px;top:409px" width="6" height="7"><rect x="0.00" y="0.40" width="6.00" height="6.00" fill="#c9a877"/></svg>
<span id="t115" style="left:29.5px;top:407px;font-size:7.4px;color:#d4d4d4;transform:translateY(0.30px) scaleX(0.8381) rotate(0.05deg);">Comp 1</span>
<svg style="left:57px;top:410px" width="6" height="1"><rect x="0.00" y="0.00" width="5.40" height="1.00" fill="#b5b5b5"/></svg>
<svg style="left:57px;top:412px" width="6" height="1"><rect x="0.00" y="0.00" width="5.40" height="1.00" fill="#b5b5b5"/></svg>
<svg style="left:57px;top:414px" width="6" height="1"><rect x="0.00" y="0.00" width="5.40" height="1.00" fill="#b5b5b5"/></svg>
<span id="t116" style="left:10px;top:422px;font-size:10.4px;color:#2d8ceb;transform:translateY(0.44px) scaleX(0.8595) rotate(0.05deg);font-weight:bold;">0:00:00:00</span>
<span id="t117" style="left:7px;top:431px;font-size:6.8px;color:#1f5c9c;transform:translateY(0.28px) scaleX(0.9103) rotate(0.05deg);">00000 (25.00 fps)</span>
<div style="left:64.5px;top:425px;width:268.5px;height:11px;background:#1a1a1a;border-radius:1.5px;"></div>
<svg style="left:66.6px;top:425.8px;" width="10" height="10" viewBox="-5.0 -5.0 10 10"><circle cx="0.6" cy="-0.8" r="2" fill="none" stroke="#d2d2d2" stroke-width="0.9"/><path d="M-0.8 0.8L-2.8 2.8" stroke="#d2d2d2" stroke-width="1.1"/><path d="M2.4 2h2l-1 1.2z" fill="#d2d2d2"/></svg>
<svg style="left:341.4px;top:425.6px;" width="12" height="12" viewBox="-6.0 -6.0 12 12"><path d="M-4 -2.6H-1M-1 -2.6H1.6M0 -2.6V2.4H2" stroke="#d2d2d2" stroke-width="0.8" fill="none"/><rect x="-4.4" y="-3.4" width="1.8" height="1.8" fill="#d2d2d2"/><rect x="1.4" y="-3.4" width="1.8" height="1.8" fill="#d2d2d2"/><rect x="1.8" y="-0.6" width="1.8" height="1.8" fill="#d2d2d2"/><rect x="1.8" y="1.8" width="1.8" height="1.8" fill="#d2d2d2"/></svg>
<svg style="left:362.6px;top:426.6px;" width="10" height="10" viewBox="-5.0 -5.0 10 10"><path d="M-3.6 0.8C-3.6 -0.6 -2 -1 0 -1C2 -1 3.6 -0.6 3.6 0.8Z" fill="#d2d2d2"/><circle cx="0" cy="-2.2" r="1.4" fill="#d2d2d2"/><path d="M-3.6 1.6H3.6V2.6H-3.6Z" fill="#d2d2d2"/><path d="M0 -1V2.4" stroke="#232323" stroke-width="0.6"/></svg>
<svg style="left:377.6px;top:426.6px;" width="10" height="10" viewBox="-5.0 -5.0 10 10"><rect x="-1.6" y="-3.6" width="5.4" height="5" fill="#d2d2d2"/><rect x="-3.8" y="-1.4" width="5.4" height="5" fill="none" stroke="#d2d2d2" stroke-width="0.9"/></svg>
<svg style="left:392.0px;top:425.6px;" width="12" height="12" viewBox="-6.0 -6.0 12 12"><ellipse cx="0" cy="0" rx="4.2" ry="2.7" transform="rotate(-35)" fill="#a9a9a9"/><path d="M-2.4 0.4L0.4 -2.6M-1 1.6L1.8 -1.4M0.4 2.4L2.8 -0.2" stroke="#555" stroke-width="0.6"/></svg>
<svg style="left:412.6px;top:425.6px;" width="12" height="12" viewBox="-6.0 -6.0 12 12"><rect x="-4.2" y="-3.6" width="8.4" height="7.4" rx="1.2" fill="none" stroke="#d2d2d2" stroke-width="0.9"/><path d="M-2.6 -1.8L2.6 2.2M2.6 2.2V0.4" stroke="#d2d2d2" stroke-width="0.8" fill="none"/><path d="M-2 -4.6v1.4M2 -4.6v1.4" stroke="#d2d2d2" stroke-width="0.8"/></svg>
<svg style="left:1px;top:443px" width="432" height="11"><rect x="0.40" y="0.20" width="431.40" height="10.00" fill="#333333"/></svg>
<svg style="left:1px;top:453px" width="432" height="1"><rect x="0.40" y="0.20" width="431.40" height="0.80" fill="#1e1e1e"/></svg>
<svg style="left:3.5999999999999996px;top:444.2px;" width="8" height="8" viewBox="-4.0 -4.0 8 8"><path d="M-3.6 0C-2 -2.6 2 -2.6 3.6 0C2 2.6 -2 2.6 -3.6 0Z" fill="#b4b4b4"/><circle cx="0" cy="0" r="1.2" fill="#333"/></svg>
<svg style="left:12.600000000000001px;top:444.2px;" width="8" height="8" viewBox="-4.0 -4.0 8 8"><path d="M-3 -1.2H-1.6L0.4 -3V3L-1.6 1.2H-3Z" fill="#b4b4b4"/><path d="M1.6 -1.6A2.4 2.4 0 0 1 1.6 1.6M2.6 -2.8A4 4 0 0 1 2.6 2.8" stroke="#b4b4b4" stroke-width="0.7" fill="none"/></svg>
<svg style="left:21.0px;top:444.2px;" width="8" height="8" viewBox="-4.0 -4.0 8 8"><circle cx="0" cy="0" r="1.7" fill="#b4b4b4"/></svg>
<svg style="left:29.799999999999997px;top:444.0px;" width="8" height="8" viewBox="-4.0 -4.0 8 8"><path d="M-1.5 -0.6V-2A1.5 1.5 0 0 1 1.5 -2V-0.6" stroke="#b4b4b4" stroke-width="0.9" fill="none"/><rect x="-2.5" y="-0.8" width="5" height="3.8" fill="#b4b4b4"/></svg>
<svg style="left:47.6px;top:443.2px;" width="10" height="10" viewBox="-5.0 -5.0 10 10"><path d="M-3.6 -3.4H0L3.8 0.4L0.4 3.8L-3.6 0Z" fill="#b4b4b4"/><circle cx="-1.8" cy="-1.6" r="0.8" fill="#333"/></svg>
<span id="t118" style="left:63.8px;top:442px;font-size:6.4px;color:#8a8a8a;transform:translateY(0.87px) scaleX(0.8982) rotate(0.05deg);font-style:italic;">#</span>
<div style="left:73px;top:450px;width:1px;height:1px;background:#6a6a6a;"></div>
<svg style="left:42px;top:444px" width="1" height="8"><rect x="0.00" y="0.60" width="0.70" height="7.40" fill="#232323"/></svg>
<svg style="left:60px;top:444px" width="2" height="8"><rect x="0.70" y="0.60" width="0.70" height="7.40" fill="#232323"/></svg>
<svg style="left:79px;top:444px" width="1" height="8"><rect x="0.30" y="0.60" width="0.70" height="7.40" fill="#232323"/></svg>
<svg style="left:228px;top:444px" width="1" height="8"><rect x="0.00" y="0.60" width="0.70" height="7.40" fill="#232323"/></svg>
<svg style="left:309px;top:444px" width="2" height="8"><rect x="0.50" y="0.60" width="0.70" height="7.40" fill="#232323"/></svg>
<svg style="left:382px;top:444px" width="1" height="8"><rect x="0.00" y="0.60" width="0.70" height="7.40" fill="#232323"/></svg>
<svg style="left:423px;top:444px" width="2" height="8"><rect x="0.70" y="0.60" width="0.70" height="7.40" fill="#232323"/></svg>
<span id="t119" style="left:83px;top:443px;font-size:7.4px;color:#8f8f8f;transform:translateY(0.10px) scaleX(0.7082) rotate(0.05deg);">Source Name</span>
<svg style="left:230.6px;top:443.2px;" width="10" height="10" viewBox="-5.0 -5.0 10 10"><path d="M-3.6 0.8C-3.6 -0.6 -2 -1 0 -1C2 -1 3.6 -0.6 3.6 0.8Z" fill="#b4b4b4"/><circle cx="0" cy="-2.2" r="1.4" fill="#b4b4b4"/><path d="M-3.6 1.6H3.6V2.6H-3.6Z" fill="#b4b4b4"/><path d="M0 -1V2.4" stroke="#232323" stroke-width="0.6"/></svg>
<svg style="left:240.2px;top:444.2px;" width="8" height="8" viewBox="-4.0 -4.0 8 8"><path d="M0 -3.4L1 -1L3.4 0L1 1L0 3.4L-1 1L-3.4 0L-1 -1Z" fill="#b4b4b4"/><circle cx="0" cy="0" r="0.9" fill="#333"/></svg>
<svg style="left:248.2px;top:444.2px;" width="8" height="8" viewBox="-4.0 -4.0 8 8"><path d="M-2.8 -2.8L2.8 2.8" stroke="#b4b4b4" stroke-width="0.9"/></svg>
<span style="left:257.6px;top:442.2px;font-family:'Liberation Serif',serif;font-style:italic;font-size:9px;line-height:11px;color:#b4b4b4;">fx</span>
<svg style="left:266.2px;top:444.2px;" width="8" height="8" viewBox="-4.0 -4.0 8 8"><rect x="-3.2" y="-3" width="6.4" height="6" fill="#b4b4b4"/><rect x="-1.8" y="-1.6" width="3.6" height="3.2" fill="#6a6a6a"/></svg>
<svg style="left:275.2px;top:444.2px;" width="8" height="8" viewBox="-4.0 -4.0 8 8"><ellipse cx="0" cy="0" rx="3.6" ry="2.2" transform="rotate(-40)" fill="none" stroke="#b4b4b4" stroke-width="1"/></svg>
<svg style="left:284.2px;top:444.2px;" width="8" height="8" viewBox="-4.0 -4.0 8 8"><g transform="rotate(45)"><circle cx="0" cy="0" r="3" fill="#b4b4b4"/><path d="M0 -2.4A2.4 2.4 0 0 0 0 2.4Z" fill="#333"/></g></svg>
<svg style="left:293.4px;top:444.2px;" width="8" height="8" viewBox="-4.0 -4.0 8 8"><circle cx="0" cy="0" r="2.8" fill="none" stroke="#b4b4b4" stroke-width="0.9"/><path d="M0 -1.6V1.6M-1.6 0H1.6" stroke="#b4b4b4" stroke-width="0.8"/></svg>
<span id="t120" style="left:313px;top:443px;font-size:7.4px;color:#8f8f8f;transform:translateY(0.10px) scaleX(0.7369) rotate(0.05deg);">Parent &amp; Link</span>
<span id="t121" style="left:385px;top:443px;font-size:7.4px;color:#8f8f8f;transform:translateY(0.10px) scaleX(0.7338) rotate(0.05deg);">Duration</span>
<svg style="left:1px;top:454px" width="432" height="10"><rect x="0.40" y="0.00" width="431.40" height="9.80" fill="#4a4a4a"/></svg>
<svg style="left:21px;top:454px" width="8" height="9"><rect x="0.60" y="0.80" width="7.20" height="7.40" fill="#3c3c3c"/></svg>
<svg style="left:30px;top:454px" width="9" height="9"><rect x="0.60" y="0.80" width="7.60" height="7.40" fill="#3c3c3c"/></svg>
<svg style="left:3.5999999999999996px;top:454.8px;" width="8" height="8" viewBox="-4.0 -4.0 8 8"><path d="M-3.6 0C-2 -2.6 2 -2.6 3.6 0C2 2.6 -2 2.6 -3.6 0Z" fill="#e0e0e0"/><circle cx="0" cy="0" r="1.2" fill="#4a4a4a"/></svg>
<svg style="left:43.0px;top:454.8px;" width="8" height="8" viewBox="-4.0 -4.0 8 8"><path d="M-2.3 -1.1L0 1.1L2.3 -1.1" stroke="#cfcfcf" stroke-width="0.85" fill="none"/></svg>
<svg style="left:51px;top:455px" width="9" height="8"><rect x="0.80" y="0.40" width="7.40" height="7.00" fill="#c83c3c"/></svg>
<span id="t122" style="left:64.8px;top:453px;font-size:7.6px;color:#e0e0e0;transform:translateY(0.43px) scaleX(0.7557) rotate(0.05deg);">1</span>
<div style="left:82px;top:454.8px;width:7.2px;height:7.4px;background:#ecf8ff;border:0.6px solid #b8b8b8;box-sizing:border-box;"></div>
<svg style="left:90px;top:454px" width="138" height="10"><rect x="0.80" y="0.40" width="137.20" height="9.00" fill="#b0b0b0"/></svg>
<span id="t123" style="left:93.7px;top:453px;font-size:7.6px;color:#1c1c1c;transform:translateY(0.43px) scaleX(0.8756) rotate(0.05deg);">Pale Royal Blue Solid 1</span>
<svg style="left:239px;top:455px" width="10" height="8"><rect x="0.80" y="0.00" width="8.40" height="7.60" fill="#3d3d3d"/></svg>
<svg style="left:275px;top:455px" width="9" height="8"><rect x="0.90" y="0.00" width="7.80" height="7.60" fill="#3d3d3d"/></svg>
<svg style="left:284px;top:455px" width="9" height="8"><rect x="0.90" y="0.00" width="7.80" height="7.60" fill="#3d3d3d"/></svg>
<svg style="left:293px;top:455px" width="9" height="8"><rect x="0.90" y="0.00" width="7.80" height="7.60" fill="#3d3d3d"/></svg>
<svg style="left:228px;top:454px" width="2" height="10"><rect x="0.60" y="0.20" width="0.80" height="9.40" fill="#3a3a3a"/></svg>
<svg style="left:230.2px;top:453.8px;" width="10" height="10" viewBox="-5.0 -5.0 10 10"><path d="M-3.6 0.8C-3.6 -0.6 -2 -1 0 -1C2 -1 3.6 -0.6 3.6 0.8Z" fill="#d8d8d8"/><circle cx="0" cy="-2.2" r="1.4" fill="#d8d8d8"/><path d="M-3.6 1.6H3.6V2.6H-3.6Z" fill="#d8d8d8"/><path d="M0 -1V2.4" stroke="#232323" stroke-width="0.6"/></svg>
<svg style="left:248.6px;top:454.8px;" width="8" height="8" viewBox="-4.0 -4.0 8 8"><path d="M-2.6 2.8L2.6 -2.8" stroke="#d8d8d8" stroke-width="0.9"/></svg>
<span style="left:258.4px;top:452.8px;font-family:'Liberation Serif',serif;font-style:italic;font-size:9px;line-height:11px;color:#d8d8d8;">fx</span>
<svg style="left:311.4px;top:453.8px;" width="10" height="10" viewBox="-5.0 -5.0 10 10"><path d="M1.1 -0.6A1.25 1.25 0 1 0 1.1 0.9C1.3 1.6 2.6 1.4 2.8 0A2.85 2.85 0 1 0 1.2 2.6" stroke="#b5b5b5" stroke-width="0.75" fill="none"/></svg>
<svg style="left:324px;top:454px" width="55" height="10"><rect x="0.50" y="0.40" width="54.40" height="9.00" fill="#242424"/></svg>
<span id="t124" style="left:328.4px;top:453px;font-size:7.6px;color:#d4d4d4;transform:translateY(0.43px) scaleX(0.8372) rotate(0.05deg);">None</span>
<svg style="left:370.0px;top:454.8px;" width="8" height="8" viewBox="-4.0 -4.0 8 8"><path d="M-2.3 -1.1L0 1.1L2.3 -1.1" stroke="#b5b5b5" stroke-width="0.85" fill="none"/></svg>
<span id="t125" style="left:386.2px;top:453px;font-size:7.4px;color:#2d8ceb;transform:translateY(0.10px) scaleX(0.8530) rotate(0.05deg);">0:00:10:00</span>
<svg style="left:53.5px;top:465.2px;" width="8" height="8" viewBox="-4.0 -4.0 8 8"><path d="M-2.3 -1.1L0 1.1L2.3 -1.1" stroke="#a9a9a9" stroke-width="0.85" fill="none"/></svg>
<span id="t126" style="left:65.0px;top:463px;font-size:7.4px;color:#a9a9a9;transform:translateY(0.70px) scaleX(0.8521) rotate(0.05deg);">Masks</span>
<svg style="left:30px;top:475px" width="9" height="9"><rect x="0.00" y="0.20" width="8.60" height="8.00" fill="#1a1a1a"/></svg>
<svg style="left:63.5px;top:475.5px;" width="8" height="8" viewBox="-4.0 -4.0 8 8"><path d="M-2.3 -1.1L0 1.1L2.3 -1.1" stroke="#a9a9a9" stroke-width="0.85" fill="none"/></svg>
<svg style="left:73px;top:476px" width="8" height="7"><rect x="0.70" y="0.20" width="6.40" height="6.40" fill="#2456d8"/></svg>
<span id="t127" style="left:84.5px;top:474px;font-size:7.4px;color:#a9a9a9;transform:translateY(0.00px) scaleX(0.8813) rotate(0.05deg);">Mask 1</span>
<svg style="left:81.0px;top:484.3px;" width="10" height="10" viewBox="-5.0 -5.0 10 10"><circle cx="0" cy="0.7" r="2.9" fill="none" stroke="#c8c8c8" stroke-width="0.95"/><path d="M-1.1 -3.5h2.2M0 -3.4v1.2M0 0.7L1.2 -0.7" stroke="#c8c8c8" stroke-width="0.9"/></svg>
<span id="t128" style="left:94.5px;top:484px;font-size:7.4px;color:#a9a9a9;transform:translateY(0.10px) scaleX(0.8934) rotate(0.05deg);">Mask Path</span>
<span id="t129" style="left:232.5px;top:484px;font-size:7.4px;color:#2d8ceb;transform:translateY(0.10px) scaleX(0.7700) rotate(0.05deg);">Shape...</span>
<svg style="left:319.2px;top:484.6px;" width="10" height="10" viewBox="-5.0 -5.0 10 10"><path d="M1.1 -0.6A1.25 1.25 0 1 0 1.1 0.9C1.3 1.6 2.6 1.4 2.8 0A2.85 2.85 0 1 0 1.2 2.6" stroke="#b5b5b5" stroke-width="0.75" fill="none"/></svg>
<svg style="left:30px;top:495px" width="9" height="9"><rect x="0.00" y="0.40" width="8.60" height="8.00" fill="#1a1a1a"/></svg>
<svg style="left:63.5px;top:495.7px;" width="8" height="8" viewBox="-4.0 -4.0 8 8"><path d="M-2.3 -1.1L0 1.1L2.3 -1.1" stroke="#a9a9a9" stroke-width="0.85" fill="none"/></svg>
<svg style="left:73px;top:496px" width="8" height="7"><rect x="0.70" y="0.40" width="6.40" height="6.40" fill="#1d4c20"/></svg>
<span id="t130" style="left:84.5px;top:494px;font-size:7.4px;color:#a9a9a9;transform:translateY(0.20px) scaleX(0.8813) rotate(0.05deg);">Mask 2</span>
<svg style="left:81.0px;top:504.5px;" width="10" height="10" viewBox="-5.0 -5.0 10 10"><circle cx="0" cy="0.7" r="2.9" fill="none" stroke="#c8c8c8" stroke-width="0.95"/><path d="M-1.1 -3.5h2.2M0 -3.4v1.2M0 0.7L1.2 -0.7" stroke="#c8c8c8" stroke-width="0.9"/></svg>
<span id="t131" style="left:94.5px;top:504px;font-size:7.4px;color:#a9a9a9;transform:translateY(0.30px) scaleX(0.8934) rotate(0.05deg);">Mask Path</span>
<span id="t132" style="left:232.5px;top:504px;font-size:7.4px;color:#2d8ceb;transform:translateY(0.30px) scaleX(0.7700) rotate(0.05deg);">Shape...</span>
<svg style="left:319.2px;top:504.8px;" width="10" height="10" viewBox="-5.0 -5.0 10 10"><path d="M1.1 -0.6A1.25 1.25 0 1 0 1.1 0.9C1.3 1.6 2.6 1.4 2.8 0A2.85 2.85 0 1 0 1.2 2.6" stroke="#b5b5b5" stroke-width="0.75" fill="none"/></svg>
<svg style="left:1px;top:463px" width="432" height="2"><rect x="0.40" y="0.70" width="431.40" height="0.60" fill="#1f1f1f"/></svg>
<svg style="left:1px;top:473px" width="432" height="2"><rect x="0.40" y="0.70" width="431.40" height="0.60" fill="#1f1f1f"/></svg>
<svg style="left:1px;top:483px" width="432" height="2"><rect x="0.40" y="0.80" width="431.40" height="0.60" fill="#1f1f1f"/></svg>
<svg style="left:1px;top:493px" width="432" height="2"><rect x="0.40" y="0.90" width="431.40" height="0.60" fill="#1f1f1f"/></svg>
<svg style="left:1px;top:504px" width="432" height="1"><rect x="0.40" y="0.00" width="431.40" height="0.60" fill="#1f1f1f"/></svg>
<svg style="left:1px;top:514px" width="432" height="1"><rect x="0.40" y="0.10" width="431.40" height="0.60" fill="#1f1f1f"/></svg>
<svg style="left:1px;top:595px" width="432" height="1"><rect x="0.40" y="0.00" width="431.40" height="0.90" fill="#161616"/></svg>
<svg style="left:1px;top:595px" width="434" height="11"><rect x="0.50" y="0.90" width="432.70" height="9.80" fill="#242424"/></svg>
<div style="left:4px;top:596.6px;width:8.6px;height:8.4px;background:#1e2c3c;border-radius:1px;"></div>
<svg style="left:4.199999999999999px;top:596.8px;" width="8" height="8" viewBox="-4.0 -4.0 8 8"><path d="M-3.2 -2.6H0.4L3.4 0.4L0.6 3.2L-3.2 -0.2Z" fill="#2d8ceb"/><path d="M-1.8 -1.2L1 1.6" stroke="#1e2c3c" stroke-width="0.6"/></svg>
<svg style="left:14.8px;top:596.8px;" width="8" height="8" viewBox="-4.0 -4.0 8 8"><circle cx="-1" cy="-0.8" r="2.2" fill="none" stroke="#d2d2d2" stroke-width="0.8"/><rect x="-0.6" y="-0.4" width="3.6" height="3.4" fill="#232323" stroke="#d2d2d2" stroke-width="0.8"/></svg>
<div style="left:25.4px;top:596.6px;width:8.4px;height:8.4px;background:#1e2c3c;border-radius:1px;"></div>
<span id="t133" style="left:26.2px;top:595px;font-size:7.6px;color:#2d8ceb;transform:translateY(0.23px) scaleX(1.1483) rotate(0.05deg);font-weight:bold;">{}</span>
<svg style="left:13px;top:596px" width="2" height="9"><rect x="0.60" y="0.40" width="0.60" height="8.60" fill="#1a1a1a"/></svg>
<svg style="left:24px;top:596px" width="1" height="9"><rect x="0.20" y="0.40" width="0.60" height="8.60" fill="#1a1a1a"/></svg>
<svg style="left:35px;top:596px" width="1" height="9"><rect x="0.00" y="0.40" width="0.60" height="8.60" fill="#1a1a1a"/></svg>
<div style="left:230px;top:596.4px;width:80px;height:8.8px;background:#2b2b2b;box-shadow:0 0 0 0.6px #1a1a1a;"></div>
<span id="t134" style="left:233.4px;top:595px;font-size:7.4px;color:#a2a2a2;transform:translateY(0.50px) scaleX(0.8807) rotate(0.05deg);">Toggle Switches / Modes</span>
<svg style="left:432px;top:424px" width="3" height="171"><rect x="0.60" y="0.00" width="1.60" height="171.00" fill="#161616"/></svg>
<svg style="left:434px;top:406px" width="564" height="36"><rect x="0.20" y="0.00" width="563.40" height="36.00" fill="#232323"/></svg>
<svg style="left:434px;top:442px" width="554" height="153"><rect x="0.20" y="0.00" width="553.40" height="153.00" fill="#333333"/></svg>
<svg style="left:434px;top:442px" width="4" height="153"><rect x="0.20" y="0.00" width="3.40" height="153.00" fill="#2a2a2a"/></svg>
<svg style="left:983px;top:442px" width="5" height="153"><rect x="0.60" y="0.00" width="4.00" height="153.00" fill="#2c2c2c"/></svg>
<svg style="left:987px;top:442px" width="11" height="164"><rect x="0.60" y="0.00" width="9.90" height="163.70" fill="#232323"/></svg>
<svg style="left:434px;top:595px" width="554" height="1"><rect x="0.20" y="0.00" width="553.40" height="0.90" fill="#161616"/></svg>
<svg style="left:434px;top:595px" width="554" height="11"><rect x="0.20" y="0.90" width="553.40" height="9.80" fill="#242424"/></svg>
<div style="left:437.4px;top:425px;width:546.2px;height:4.6px;background:#6e6e6e;border-radius:1px;"></div>
<div style="left:434.6px;top:425px;width:3.4px;height:4.6px;background:#2d8ceb;border-radius:2.3px 0 0 2.3px;"></div>
<div style="left:983.8px;top:425px;width:3.8px;height:4.6px;background:#2d8ceb;border-radius:0 2.3px 2.3px 0;"></div>
<span id="t135" style="left:439.8px;top:429px;font-size:7.2px;color:#a9a9a9;transform:translateY(0.00px) scaleX(0.8428) rotate(0.05deg);">0s</span>
<span id="t136" style="left:486.96px;top:429px;font-size:7.2px;color:#a9a9a9;transform:translateY(0.00px) scaleX(0.8280) rotate(0.05deg);">01s</span>
<svg style="left:492px;top:438px" width="1" height="4"><rect x="0.16" y="0.40" width="0.80" height="2.80" fill="#8a8a8a"/></svg>
<span id="t137" style="left:541.52px;top:429px;font-size:7.2px;color:#a9a9a9;transform:translateY(0.00px) scaleX(0.8280) rotate(0.05deg);">02s</span>
<svg style="left:546px;top:438px" width="2" height="4"><rect x="0.72" y="0.40" width="0.80" height="2.80" fill="#8a8a8a"/></svg>
<span id="t138" style="left:596.08px;top:429px;font-size:7.2px;color:#a9a9a9;transform:translateY(0.00px) scaleX(0.8280) rotate(0.05deg);">03s</span>
<svg style="left:601px;top:438px" width="2" height="4"><rect x="0.28" y="0.40" width="0.80" height="2.80" fill="#8a8a8a"/></svg>
<span id="t139" style="left:650.64px;top:429px;font-size:7.2px;color:#a9a9a9;transform:translateY(0.00px) scaleX(0.8280) rotate(0.05deg);">04s</span>
<svg style="left:655px;top:438px" width="2" height="4"><rect x="0.84" y="0.40" width="0.80" height="2.80" fill="#8a8a8a"/></svg>
<span id="t140" style="left:705.1999999999999px;top:429px;font-size:7.2px;color:#a9a9a9;transform:translateY(0.00px) scaleX(0.8280) rotate(0.05deg);">05s</span>
<svg style="left:710px;top:438px" width="2" height="4"><rect x="0.40" y="0.40" width="0.80" height="2.80" fill="#8a8a8a"/></svg>
<span id="t141" style="left:759.76px;top:429px;font-size:7.2px;color:#a9a9a9;transform:translateY(0.00px) scaleX(0.8280) rotate(0.05deg);">06s</span>
<svg style="left:764px;top:438px" width="2" height="4"><rect x="0.96" y="0.40" width="0.80" height="2.80" fill="#8a8a8a"/></svg>
<span id="t142" style="left:814.32px;top:429px;font-size:7.2px;color:#a9a9a9;transform:translateY(0.00px) scaleX(0.8280) rotate(0.05deg);">07s</span>
<svg style="left:819px;top:438px" width="2" height="4"><rect x="0.52" y="0.40" width="0.80" height="2.80" fill="#8a8a8a"/></svg>
<span id="t143" style="left:868.88px;top:429px;font-size:7.2px;color:#a9a9a9;transform:translateY(0.00px) scaleX(0.8280) rotate(0.05deg);">08s</span>
<svg style="left:874px;top:438px" width="1" height="4"><rect x="0.08" y="0.40" width="0.80" height="2.80" fill="#8a8a8a"/></svg>
<span id="t144" style="left:923.4399999999999px;top:429px;font-size:7.2px;color:#a9a9a9;transform:translateY(0.00px) scaleX(0.8280) rotate(0.05deg);">09s</span>
<svg style="left:928px;top:438px" width="2" height="4"><rect x="0.64" y="0.40" width="0.80" height="2.80" fill="#8a8a8a"/></svg>
<span id="t145" style="left:977.8px;top:429px;font-size:7.2px;color:#a9a9a9;transform:translateY(0.00px) scaleX(0.8280) rotate(0.05deg);">10s</span>
<svg style="left:983px;top:438px" width="1" height="4"><rect x="0.20" y="0.40" width="0.80" height="2.80" fill="#8a8a8a"/></svg>
<svg style="left:438px;top:442px" width="546" height="9"><rect x="0.00" y="0.00" width="545.60" height="9.00" fill="#686868"/></svg>
<div style="left:434.6px;top:442px;width:3.2px;height:9px;background:#2d8ceb;border-radius:1.5px 0 0 1.5px;"></div>
<div style="left:983.8px;top:442px;width:3.4px;height:9px;background:#2d8ceb;border-radius:0 1.5px 1.5px 0;"></div>
<svg style="left:438px;top:451px" width="546" height="3"><rect x="0.00" y="0.40" width="545.60" height="2.10" fill="#10d010"/></svg>
<svg style="left:438px;top:453px" width="546" height="2"><rect x="0.00" y="0.60" width="545.60" height="0.60" fill="#1c1c1c"/></svg>
<svg style="left:434px;top:454px" width="554" height="10"><rect x="0.20" y="0.20" width="553.40" height="9.40" fill="#414141"/></svg>
<svg style="left:438px;top:454px" width="546" height="10"><rect x="0.00" y="0.20" width="545.60" height="9.20" fill="#b54c52"/></svg>
<svg style="left:438px;top:454px;" width="546" height="10"><defs><filter id="nz" x="0" y="0" width="100%" height="100%"><feTurbulence type="fractalNoise" baseFrequency="0.8" numOctaves="1" seed="3"/><feColorMatrix type="matrix" values="0 0 0 0 0  0 0 0 0 0  0 0 0 0 0  0.3 0 0 0 -0.08"/></filter></defs><rect x="0" y="0.2" width="545.6" height="9.2" filter="url(#nz)"/></svg>
<svg style="left:983px;top:454px" width="5" height="10"><rect x="0.60" y="0.20" width="4.00" height="9.20" fill="#505050"/></svg>
<svg style="left:434px;top:463px" width="554" height="2"><rect x="0.20" y="0.65" width="553.40" height="0.70" fill="#2a2a2a"/></svg>
<svg style="left:434px;top:473px" width="554" height="2"><rect x="0.20" y="0.45" width="553.40" height="0.70" fill="#2a2a2a"/></svg>
<svg style="left:434px;top:483px" width="554" height="2"><rect x="0.20" y="0.55" width="553.40" height="0.70" fill="#2a2a2a"/></svg>
<svg style="left:434px;top:493px" width="554" height="2"><rect x="0.20" y="0.55" width="553.40" height="0.70" fill="#2a2a2a"/></svg>
<svg style="left:434px;top:503px" width="554" height="2"><rect x="0.20" y="0.75" width="553.40" height="0.70" fill="#2a2a2a"/></svg>
<svg style="left:434px;top:513px" width="554" height="2"><rect x="0.20" y="0.85" width="553.40" height="0.70" fill="#2a2a2a"/></svg>
<svg style="left:437px;top:442px" width="2" height="153"><rect x="0.00" y="0.00" width="1.60" height="153.00" fill="#2f6ab4"/></svg>
<svg style="left:434.0px;top:465.0px;" width="8" height="8" viewBox="-4.0 -4.0 8 8"><path d="M-1.7 -3.2H1.7M-1.7 3.2H1.7M0 -3.2V3.2" stroke="#b9cbe0" stroke-width="1.3"/></svg>
<svg style="left:434.0px;top:475.1px;" width="8" height="8" viewBox="-4.0 -4.0 8 8"><path d="M-1.7 -3.2H1.7M-1.7 3.2H1.7M0 -3.2V3.2" stroke="#b9cbe0" stroke-width="1.3"/></svg>
<svg style="left:434.0px;top:485.2px;" width="8" height="8" viewBox="-4.0 -4.0 8 8"><path d="M-1.7 -3.2H1.7M-1.7 3.2H1.7M0 -3.2V3.2" stroke="#b9cbe0" stroke-width="1.3"/></svg>
<svg style="left:434.0px;top:495.3px;" width="8" height="8" viewBox="-4.0 -4.0 8 8"><path d="M-1.7 -3.2H1.7M-1.7 3.2H1.7M0 -3.2V3.2" stroke="#b9cbe0" stroke-width="1.3"/></svg>
<svg style="left:434.0px;top:505.4px;" width="8" height="8" viewBox="-4.0 -4.0 8 8"><path d="M-1.7 -3.2H1.7M-1.7 3.2H1.7M0 -3.2V3.2" stroke="#b9cbe0" stroke-width="1.3"/></svg>
<svg style="left:432.0px;top:430.0px;" width="12" height="12" viewBox="-6.0 -6.0 12 12"><path d="M-3.8 -3.4H3.8V1L0 5L-3.8 1Z" fill="#2d8ceb"/><path d="M-1.4 -0.6L0 1L1.4 -0.6" stroke="#1d5fa8" stroke-width="0.8" fill="none"/></svg>
<svg style="left:987.8px;top:441.6px;" width="10" height="10" viewBox="-5.0 -5.0 10 10"><path d="M-3.2 -4H3.2V1.2L0 4.4L-3.2 1.2Z" fill="#c8c8c8"/></svg>
<svg style="left:987.4px;top:454.0px;" width="10" height="10" viewBox="-5.0 -5.0 10 10"><path d="M-4.2 0L-0.8 -3V-1.4H0.8V1.4H-0.8V3Z" fill="#232323" stroke="#d8d8d8" stroke-width="0.8"/><rect x="1.2" y="-1.8" width="3" height="3.4" fill="#d8d8d8"/></svg>
<svg style="left:435.6px;top:596.8px;" width="8" height="8" viewBox="-4.0 -4.0 8 8"><path d="M-2.6 1.4L-0.8 -0.8L0.2 0.2L1 -0.4L2.6 1.4Z" fill="#c4c4c4"/></svg>
<svg style="left:452px;top:600px" width="25" height="2"><rect x="0.00" y="0.40" width="25.00" height="0.80" fill="#4a4a4a"/></svg>
<svg style="left:448.2px;top:596.8px;" width="8" height="8" viewBox="-4.0 -4.0 8 8"><circle cx="0" cy="0" r="2" fill="#232323" stroke="#c4c4c4" stroke-width="0.9"/></svg>
<svg style="left:484.8px;top:595.6px;" width="10" height="10" viewBox="-5.0 -5.0 10 10"><path d="M-4.4 2.2L-1.4 -2L0.2 0L1.6 -1.4L4.4 2.2Z" fill="#c4c4c4"/></svg>
<svg style="left:0px;top:605px" width="999" height="2"><rect x="0.00" y="0.40" width="999.00" height="1.60" fill="#2d5c99"/></svg>
</div></body></html>
